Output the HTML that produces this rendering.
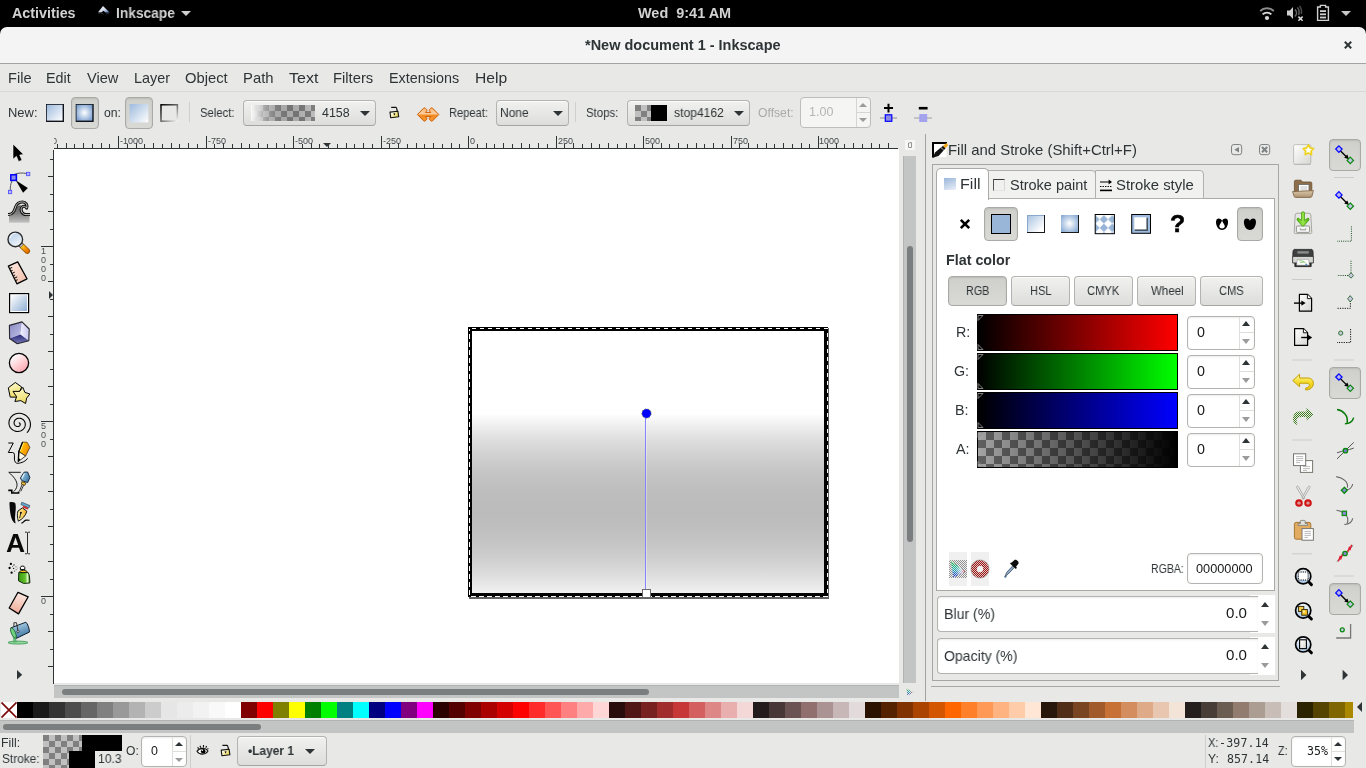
<!DOCTYPE html>
<html lang="en"><head><meta charset="utf-8"><title>*New document 1 - Inkscape</title>
<style>
html,body{margin:0;padding:0;}
body{width:1366px;height:768px;overflow:hidden;position:relative;background:#e8e8e7;font-family:"Liberation Sans", sans-serif;}
div,span,svg{box-sizing:border-box;}
.t{position:absolute;line-height:20px;white-space:pre;color:#2e3436;will-change:transform;transform-origin:0 0;}
svg{position:absolute;overflow:visible;}

.btn{position:absolute;border:1px solid #b3b3af;border-bottom-color:#a4a4a0;border-radius:4px;background:linear-gradient(#f1f1f0,#dddddb);box-shadow:inset 0 1px 0 rgba(255,255,255,.75);}
.btn.on{background:linear-gradient(#cfcfcb,#d9d9d6);border-color:#a9a9a5;box-shadow:inset 0 1px 2px rgba(0,0,0,.10);}
.entry{position:absolute;border:1px solid #b3b3af;border-radius:4px;background:#fff;box-shadow:inset 0 1px 2px rgba(0,0,0,.08);}
.tri{position:absolute;width:0;height:0;}
.sep{position:absolute;background:#cfcfcd;}

</style></head>
<body>
<svg width="0" height="0" style="left:0;top:0"><defs>
<linearGradient id="gBlue" x1="0" y1="0" x2="1" y2="1"><stop offset="0" stop-color="#ffffff"/><stop offset="1" stop-color="#8fafd3"/></linearGradient>
<linearGradient id="gBlueR" x1="0" y1="0" x2="1" y2="1"><stop offset="0" stop-color="#9dbadd"/><stop offset="1" stop-color="#ffffff"/></linearGradient>
<radialGradient id="gRad" cx="0.5" cy="0.5" r="0.6"><stop offset="0" stop-color="#ffffff"/><stop offset="1" stop-color="#7fa3d1"/></radialGradient>
<linearGradient id="gPink" x1="0.2" y1="0.1" x2="0.8" y2="0.9"><stop offset="0" stop-color="#ffffff"/><stop offset="1" stop-color="#ffa8b2"/></linearGradient>
<linearGradient id="gTweak" x1="0" y1="0" x2="0" y2="1"><stop offset="0" stop-color="#5a5a5a"/><stop offset="0.45" stop-color="#808080"/><stop offset="1" stop-color="#c4c4c4"/></linearGradient>
<linearGradient id="gGlass" x1="0.2" y1="0" x2="0.8" y2="1"><stop offset="0" stop-color="#b7cfe9"/><stop offset="1" stop-color="#f3f7fb"/></linearGradient>
<linearGradient id="gSalmon" x1="0" y1="0" x2="1" y2="1"><stop offset="0" stop-color="#fdebe3"/><stop offset="1" stop-color="#f2bda9"/></linearGradient>
<linearGradient id="gEraser" x1="0.6" y1="0" x2="0.4" y2="1"><stop offset="0" stop-color="#fdece6"/><stop offset="1" stop-color="#efa994"/></linearGradient>
<linearGradient id="gYel" x1="0" y1="0" x2="0.3" y2="1"><stop offset="0" stop-color="#fffbd5"/><stop offset="1" stop-color="#eede6a"/></linearGradient>
<linearGradient id="gBoxL" x1="0" y1="0" x2="1" y2="1"><stop offset="0" stop-color="#8686c2"/><stop offset="1" stop-color="#c4c4e8"/></linearGradient>
<linearGradient id="gBoxR" x1="0" y1="0" x2="1" y2="0"><stop offset="0" stop-color="#f0f0ff"/><stop offset="1" stop-color="#c6c6ee"/></linearGradient>
<linearGradient id="gBoxB" x1="0.5" y1="0" x2="0.5" y2="1"><stop offset="0" stop-color="#28287a"/><stop offset="1" stop-color="#7a7ab8"/></linearGradient>
<linearGradient id="gPencil" x1="0" y1="0" x2="1" y2="0.4"><stop offset="0" stop-color="#ffe100"/><stop offset="0.5" stop-color="#ffb400"/><stop offset="1" stop-color="#f08c00"/></linearGradient>
<linearGradient id="gPen" x1="0" y1="0" x2="1" y2="0.5"><stop offset="0" stop-color="#b5dcee"/><stop offset="1" stop-color="#3d78aa"/></linearGradient>
<linearGradient id="gNib" x1="0" y1="0" x2="1" y2="0"><stop offset="0" stop-color="#fff6b8"/><stop offset="1" stop-color="#f0b020"/></linearGradient>
<linearGradient id="gCan" x1="0" y1="0" x2="1" y2="0"><stop offset="0" stop-color="#3c9a12"/><stop offset="0.6" stop-color="#62c02a"/><stop offset="0.8" stop-color="#d8f5c0"/><stop offset="1" stop-color="#3a9010"/></linearGradient>
<linearGradient id="gBucket" x1="0.3" y1="0" x2="0.7" y2="1"><stop offset="0" stop-color="#b4d8ec"/><stop offset="1" stop-color="#356c9c"/></linearGradient>
<linearGradient id="gHandle" x1="0" y1="0" x2="1" y2="1"><stop offset="0" stop-color="#ffc520"/><stop offset="1" stop-color="#e87800"/></linearGradient>
</defs></svg>
<!-- top bar -->
<div style="position:absolute;left:0px;top:0px;width:1366px;height:36px;background:#000;"></div>
<span id="t0" class="t" style="left:11.75px;top:3.27px;font-size:14.3px;font-weight:bold;color:#d2d2d2;transform:scaleX(0.9992);">Activities</span>
<span id="t1" class="t" style="left:116.06px;top:3.27px;font-size:14.3px;font-weight:bold;color:#d2d2d2;transform:scaleX(0.9623);">Inkscape</span>
<div class="tri" style="left:180.9px;top:10.8px;border-left:5.3px solid transparent;border-right:5.3px solid transparent;border-top:5.8px solid #d0d0d0;"></div>
<span id="t2" class="t" style="left:637.80px;top:3.07px;font-size:14.3px;font-weight:bold;color:#d2d2d2;transform:scaleX(1.0104);">Wed  9:41 AM</span>
<div class="tri" style="left:1341px;top:11px;border-left:5.0px solid transparent;border-right:5.0px solid transparent;border-top:5.2px solid #c8c8c8;"></div>
<svg style="left:90px;top:0px" width="1270" height="27" viewBox="90 0 1270 27" ><defs><linearGradient id="gInk" x1="0" y1="0" x2="1" y2="1"><stop offset="0" stop-color="#ffffff"/><stop offset="0.6" stop-color="#c8d4e4"/><stop offset="1" stop-color="#3a62a8"/></linearGradient></defs><path d="M103 6 L109.6 12.6 L105.5 12.4 L103.6 10.8 L101.2 12.6 L98 12.2 Z" fill="url(#gInk)"/><path d="M98.4 13.6 L101 12.8 L103.6 14.2 M106 14 L109 13.4" stroke="#3a3a3a" stroke-width="0.8" fill="none"/><circle cx="1267" cy="18" r="2.1" fill="#d6d6d6"/><path d="M1262.6 14.4 A6.2 6.2 0 0 1 1271.4 14.4" fill="none" stroke="#d6d6d6" stroke-width="1.8"/><path d="M1260.2 11 A9.8 9.8 0 0 1 1273.8 11" fill="none" stroke="#8e8e8e" stroke-width="1.9"/><path d="M1287 10.6 L1289.8 10.6 L1293 7 L1293 19 L1289.8 15.6 L1287 15.6 Z" fill="#d0d0d0"/><path d="M1295 9.6 A5 5 0 0 1 1295 16.6" fill="none" stroke="#6a6a6a" stroke-width="1.5"/><path d="M1297.4 7.4 A8 8 0 0 1 1298.6 15" fill="none" stroke="#5a5a5a" stroke-width="1.5"/><path d="M1299.6 5.8 A11 11 0 0 1 1301.4 14" fill="none" stroke="#4a4a4a" stroke-width="1.4"/><path d="M1298.4 16.6 L1302.6 20.8 M1302.6 16.6 L1298.4 20.8" stroke="#d8d8d8" stroke-width="1.5"/><path d="M1320.4 7 L1320.4 5.4 L1325.6 5.4 L1325.6 7 L1328.4 7 L1328.4 20.4 L1317.6 20.4 L1317.6 7 Z" fill="none" stroke="#d0d0d0" stroke-width="1.4"/><rect x="1320" y="10.2" width="6" height="1.8" fill="#d0d0d0"/><rect x="1320" y="13.4" width="6" height="1.8" fill="#d0d0d0"/><rect x="1320" y="16.6" width="6" height="1.8" fill="#d0d0d0"/></svg>
<!-- title bar -->
<div style="position:absolute;left:0px;top:27px;width:1366px;height:36px;background:#f4f4f4;border-radius:7px 7px 0 0;"></div>
<div style="position:absolute;left:0px;top:63px;width:1366px;height:1px;background:#a3a39f;"></div>
<span id="t3" class="t" style="left:584.99px;top:35.27px;font-size:14.3px;font-weight:bold;transform:scaleX(1.0130);">*New document 1 - Inkscape</span>
<svg style="left:1344px;top:41px" width="8" height="8" viewBox="0 0 8 8"><path d="M0.8 0.8 L7.2 7.2 M7.2 0.8 L0.8 7.2" stroke="#2e3436" stroke-width="2" fill="none"/></svg>
<!-- menu bar -->
<span id="t4" class="t" style="left:7.53px;top:68.07px;font-size:14.3px;transform:scaleX(1.0212);">File</span>
<span id="t5" class="t" style="left:45.96px;top:68.07px;font-size:14.3px;transform:scaleX(0.9935);">Edit</span>
<span id="t6" class="t" style="left:87.20px;top:68.07px;font-size:14.3px;transform:scaleX(1.0211);">View</span>
<span id="t7" class="t" style="left:134.35px;top:68.07px;font-size:14.3px;transform:scaleX(1.0044);">Layer</span>
<span id="t8" class="t" style="left:185.43px;top:68.07px;font-size:14.3px;transform:scaleX(1.0321);">Object</span>
<span id="t9" class="t" style="left:243.31px;top:68.07px;font-size:14.3px;transform:scaleX(1.0385);">Path</span>
<span id="t10" class="t" style="left:288.93px;top:68.07px;font-size:14.3px;transform:scaleX(1.1192);">Text</span>
<span id="t11" class="t" style="left:332.89px;top:68.07px;font-size:14.3px;transform:scaleX(1.0336);">Filters</span>
<span id="t12" class="t" style="left:388.74px;top:68.07px;font-size:14.3px;transform:scaleX(1.0037);">Extensions</span>
<span id="t13" class="t" style="left:474.79px;top:68.07px;font-size:14.3px;transform:scaleX(1.0945);">Help</span>
<div style="position:absolute;left:0px;top:91px;width:1366px;height:1px;background:#d9d9d7;"></div>
<!-- tool controls -->
<span id="t14" class="t" style="left:7.55px;top:103.00px;font-size:12.1px;transform:scaleX(1.0706);">New:</span>
<svg style="left:44px;top:102px" width="24" height="24" viewBox="44 102 24 24" ><rect x="46" y="104" width="18" height="18" fill="#10141a"/><rect x="46.8" y="104.8" width="15.8" height="15.8" fill="url(#gBlueR)"/></svg>
<div class="btn on" style="left:71px;top:97px;width:28px;height:32px;"></div>
<svg style="left:74px;top:102px" width="24" height="24" viewBox="74 102 24 24" ><rect x="75.7" y="104" width="18" height="18" fill="#10141a"/><rect x="76.5" y="104.8" width="15.8" height="15.8" fill="url(#gRad)"/></svg>
<span id="t15" class="t" style="left:103.90px;top:103.00px;font-size:12.1px;transform:scaleX(1.0098);">on:</span>
<div class="btn on" style="left:125px;top:97px;width:28px;height:32px;"></div>
<svg style="left:128px;top:102px" width="24" height="24" viewBox="128 102 24 24" ><rect x="129.6" y="104" width="18.7" height="18.4" fill="url(#gBlueR)"/></svg>
<svg style="left:158px;top:102px" width="24" height="24" viewBox="158 102 24 24" ><defs><linearGradient id="gStk" x1="0" y1="0" x2="1" y2="1"><stop offset="0" stop-color="#000"/><stop offset="0.5" stop-color="#666"/><stop offset="1" stop-color="#f4f4f4"/></linearGradient></defs><rect x="161" y="104.8" width="16.4" height="16.4" fill="none" stroke="url(#gStk)" stroke-width="1.5"/></svg>
<div class="sep" style="left:189px;top:102px;width:1px;height:20px;"></div>
<span id="t16" class="t" style="left:199.57px;top:103.00px;font-size:12.1px;transform:scaleX(0.9324);">Select:</span>
<div class="btn" style="left:243px;top:100px;width:133px;height:26px;"></div>
<div style="position:absolute;left:251px;top:105px;width:64px;height:16px;background-color:#808080;background-image:linear-gradient(45deg,#c0c0c0 25%,transparent 25%,transparent 75%,#c0c0c0 75%),linear-gradient(45deg,#c0c0c0 25%,transparent 25%,transparent 75%,#c0c0c0 75%);background-size:12px 12px;background-position:0 0,6.0px 6.0px;"><div style="position:absolute;left:0px;top:0px;width:64px;height:16px;background:linear-gradient(90deg,rgba(250,250,250,1) 0%,rgba(238,238,238,.95) 5%,rgba(222,222,222,.85) 12%,rgba(190,190,190,.6) 22%,rgba(130,130,130,.36) 38%,rgba(70,70,70,.2) 55%,rgba(40,40,40,.14) 72%,rgba(20,20,20,.07) 88%,rgba(0,0,0,0) 100%);"></div></div>
<span id="t17" class="t" style="left:322.15px;top:103.10px;font-size:12.4px;transform:scaleX(1.0019);">4158</span>
<div class="tri" style="left:359.8px;top:111px;border-left:5.0px solid transparent;border-right:5.0px solid transparent;border-top:5px solid #2e3436;"></div>
<svg style="left:386px;top:104px" width="16" height="18" viewBox="386 104 16 18" ><defs><linearGradient id="gLock" x1="0" y1="0" x2="1" y2="0.6"><stop offset="0.15" stop-color="#ffffff"/><stop offset="1" stop-color="#e6d24a"/></linearGradient></defs><path d="M391.2 107.3 L395.9 107.3 C396.7 107.3 396.9 109.2 397.3 111.5" fill="none" stroke="#111" stroke-width="1.2"/><path d="M390.0 112.10000000000001 L397.9 111.2 L398.7 116.8 L390.7 117.8 Z" fill="url(#gLock)" stroke="#111" stroke-width="1.1" stroke-linejoin="round"/><path d="M393.3 113.4 L395.3 113.3 L394.5 115.60000000000001 Z" fill="#000"/></svg>
<svg style="left:415px;top:105px" width="28" height="20" viewBox="415 105 28 20" ><defs><linearGradient id="gOr" x1="0" y1="0" x2="0" y2="1"><stop offset="0" stop-color="#fdb36a"/><stop offset="0.45" stop-color="#fbd0a4"/><stop offset="0.55" stop-color="#f58a22"/><stop offset="1" stop-color="#f7962f"/></linearGradient></defs><path d="M417.4 114.5 L423.6 108.2 Q424.6 107.4 425.6 108.4 L426.6 109.4 Q427.4 110.4 426.4 111.4 L425.4 112.4 L430.8 112.4 L429.8 111.4 Q428.8 110.4 429.6 109.4 L430.6 108.4 Q431.6 107.4 432.6 108.2 L438.8 114.5 L432.6 120.8 Q431.6 121.6 430.6 120.6 L429.6 119.6 Q428.8 118.6 429.8 117.6 L430.8 116.6 L425.4 116.6 L426.4 117.6 Q427.4 118.6 426.6 119.6 L425.6 120.6 Q424.6 121.6 423.6 120.8 Z" fill="url(#gOr)" stroke="#cc5c00" stroke-width="1" stroke-linejoin="round"/></svg>
<span id="t18" class="t" style="left:448.85px;top:103.00px;font-size:12.1px;transform:scaleX(0.9168);">Repeat:</span>
<div class="btn" style="left:496px;top:100px;width:73px;height:26px;"></div>
<span id="t19" class="t" style="left:500.25px;top:103.10px;font-size:12.4px;transform:scaleX(0.9679);">None</span>
<div class="tri" style="left:552.9px;top:111px;border-left:5.0px solid transparent;border-right:5.0px solid transparent;border-top:5px solid #2e3436;"></div>
<div class="sep" style="left:575px;top:102px;width:1px;height:20px;"></div>
<span id="t20" class="t" style="left:585.56px;top:103.00px;font-size:12.1px;transform:scaleX(0.9405);">Stops:</span>
<div class="btn" style="left:627px;top:100px;width:123px;height:26px;"></div>
<div style="position:absolute;left:635px;top:105px;width:16px;height:16px;background-color:#808080;background-image:linear-gradient(45deg,#c0c0c0 25%,transparent 25%,transparent 75%,#c0c0c0 75%),linear-gradient(45deg,#c0c0c0 25%,transparent 25%,transparent 75%,#c0c0c0 75%);background-size:12px 12px;background-position:0 0,6.0px 6.0px;"></div>
<div style="position:absolute;left:651px;top:105px;width:16px;height:16px;background:#000;"></div>
<span id="t21" class="t" style="left:673.52px;top:103.10px;font-size:12.4px;transform:scaleX(0.9780);">stop4162</span>
<div class="tri" style="left:734px;top:111px;border-left:5.0px solid transparent;border-right:5.0px solid transparent;border-top:5px solid #2e3436;"></div>
<span id="t22" class="t" style="left:758.49px;top:103.00px;font-size:12.1px;color:#a9abab;transform:scaleX(1.0074);">Offset:</span>
<div class="entry" style="left:800px;top:97px;width:71px;height:31px;background:#f5f5f4;border-color:#bdbdb9;box-shadow:none;"></div>
<div style="position:absolute;left:856px;top:98px;width:1px;height:29px;background:#d5d5d2;"></div>
<div style="position:absolute;left:857px;top:112px;width:13px;height:1px;background:#d5d5d2;"></div>
<span id="t23" class="t" style="left:808.98px;top:101.70px;font-size:12.4px;color:#b4b6b5;transform:scaleX(1.0110);">1.00</span>
<div class="tri" style="left:859px;top:102.6px;border-left:4.5px solid transparent;border-right:4.5px solid transparent;border-bottom:4.5px solid #9a9c9b;"></div>
<div class="tri" style="left:859px;top:118px;border-left:4.5px solid transparent;border-right:4.5px solid transparent;border-top:4.5px solid #9a9c9b;"></div>
<svg style="left:878px;top:102px" width="22" height="22" viewBox="878 102 22 22" ><path d="M884 108 H893 M888.5 103.8 V112.4" stroke="#000" stroke-width="2"/><path d="M880 118 H897" stroke="#909090" stroke-width="1"/><rect x="885.3" y="114.8" width="6.5" height="6.5" fill="#8c8ce4" stroke="#0000ff" stroke-width="1.2"/></svg>
<svg style="left:912px;top:102px" width="22" height="22" viewBox="912 102 22 22" ><path d="M918.8 108.2 H927.6" stroke="#000" stroke-width="2.6"/><path d="M914 118 H932" stroke="#a0a0a0" stroke-width="1"/><rect x="919.8" y="114.6" width="7" height="7" fill="#a4a4ec" stroke="#9a9af0" stroke-width="0.8"/></svg>
<!-- rulers -->
<svg style="left:54px;top:134px" width="845" height="16" viewBox="54 134 845 16" shape-rendering="crispEdges"><rect x="54" y="148" width="844" height="1" fill="#2e3436"/><rect x="57" y="144" width="1" height="4" fill="#2e3436"/><rect x="66" y="143" width="1" height="5" fill="#2e3436"/><rect x="74" y="144" width="1" height="4" fill="#2e3436"/><rect x="83" y="143" width="1" height="5" fill="#2e3436"/><rect x="92" y="144" width="1" height="4" fill="#2e3436"/><rect x="101" y="143" width="1" height="5" fill="#2e3436"/><rect x="109" y="144" width="1" height="4" fill="#2e3436"/><rect x="118" y="136" width="1" height="12" fill="#2e3436"/><rect x="127" y="144" width="1" height="4" fill="#2e3436"/><rect x="136" y="143" width="1" height="5" fill="#2e3436"/><rect x="144" y="144" width="1" height="4" fill="#2e3436"/><rect x="153" y="143" width="1" height="5" fill="#2e3436"/><rect x="162" y="144" width="1" height="4" fill="#2e3436"/><rect x="171" y="143" width="1" height="5" fill="#2e3436"/><rect x="179" y="144" width="1" height="4" fill="#2e3436"/><rect x="188" y="143" width="1" height="5" fill="#2e3436"/><rect x="197" y="144" width="1" height="4" fill="#2e3436"/><rect x="206" y="136" width="1" height="12" fill="#2e3436"/><rect x="214" y="144" width="1" height="4" fill="#2e3436"/><rect x="223" y="143" width="1" height="5" fill="#2e3436"/><rect x="232" y="144" width="1" height="4" fill="#2e3436"/><rect x="241" y="143" width="1" height="5" fill="#2e3436"/><rect x="249" y="144" width="1" height="4" fill="#2e3436"/><rect x="258" y="143" width="1" height="5" fill="#2e3436"/><rect x="267" y="144" width="1" height="4" fill="#2e3436"/><rect x="276" y="143" width="1" height="5" fill="#2e3436"/><rect x="284" y="144" width="1" height="4" fill="#2e3436"/><rect x="293" y="136" width="1" height="12" fill="#2e3436"/><rect x="302" y="144" width="1" height="4" fill="#2e3436"/><rect x="311" y="143" width="1" height="5" fill="#2e3436"/><rect x="319" y="144" width="1" height="4" fill="#2e3436"/><rect x="328" y="143" width="1" height="5" fill="#2e3436"/><rect x="337" y="144" width="1" height="4" fill="#2e3436"/><rect x="346" y="143" width="1" height="5" fill="#2e3436"/><rect x="354" y="144" width="1" height="4" fill="#2e3436"/><rect x="363" y="143" width="1" height="5" fill="#2e3436"/><rect x="372" y="144" width="1" height="4" fill="#2e3436"/><rect x="381" y="136" width="1" height="12" fill="#2e3436"/><rect x="389" y="144" width="1" height="4" fill="#2e3436"/><rect x="398" y="143" width="1" height="5" fill="#2e3436"/><rect x="407" y="144" width="1" height="4" fill="#2e3436"/><rect x="416" y="143" width="1" height="5" fill="#2e3436"/><rect x="424" y="144" width="1" height="4" fill="#2e3436"/><rect x="433" y="143" width="1" height="5" fill="#2e3436"/><rect x="442" y="144" width="1" height="4" fill="#2e3436"/><rect x="451" y="143" width="1" height="5" fill="#2e3436"/><rect x="459" y="144" width="1" height="4" fill="#2e3436"/><rect x="468" y="136" width="1" height="12" fill="#2e3436"/><rect x="477" y="144" width="1" height="4" fill="#2e3436"/><rect x="486" y="143" width="1" height="5" fill="#2e3436"/><rect x="494" y="144" width="1" height="4" fill="#2e3436"/><rect x="503" y="143" width="1" height="5" fill="#2e3436"/><rect x="512" y="144" width="1" height="4" fill="#2e3436"/><rect x="521" y="143" width="1" height="5" fill="#2e3436"/><rect x="529" y="144" width="1" height="4" fill="#2e3436"/><rect x="538" y="143" width="1" height="5" fill="#2e3436"/><rect x="547" y="144" width="1" height="4" fill="#2e3436"/><rect x="556" y="136" width="1" height="12" fill="#2e3436"/><rect x="564" y="144" width="1" height="4" fill="#2e3436"/><rect x="573" y="143" width="1" height="5" fill="#2e3436"/><rect x="582" y="144" width="1" height="4" fill="#2e3436"/><rect x="591" y="143" width="1" height="5" fill="#2e3436"/><rect x="599" y="144" width="1" height="4" fill="#2e3436"/><rect x="608" y="143" width="1" height="5" fill="#2e3436"/><rect x="617" y="144" width="1" height="4" fill="#2e3436"/><rect x="626" y="143" width="1" height="5" fill="#2e3436"/><rect x="634" y="144" width="1" height="4" fill="#2e3436"/><rect x="643" y="136" width="1" height="12" fill="#2e3436"/><rect x="652" y="144" width="1" height="4" fill="#2e3436"/><rect x="661" y="143" width="1" height="5" fill="#2e3436"/><rect x="669" y="144" width="1" height="4" fill="#2e3436"/><rect x="678" y="143" width="1" height="5" fill="#2e3436"/><rect x="687" y="144" width="1" height="4" fill="#2e3436"/><rect x="696" y="143" width="1" height="5" fill="#2e3436"/><rect x="704" y="144" width="1" height="4" fill="#2e3436"/><rect x="713" y="143" width="1" height="5" fill="#2e3436"/><rect x="722" y="144" width="1" height="4" fill="#2e3436"/><rect x="731" y="136" width="1" height="12" fill="#2e3436"/><rect x="739" y="144" width="1" height="4" fill="#2e3436"/><rect x="748" y="143" width="1" height="5" fill="#2e3436"/><rect x="757" y="144" width="1" height="4" fill="#2e3436"/><rect x="766" y="143" width="1" height="5" fill="#2e3436"/><rect x="774" y="144" width="1" height="4" fill="#2e3436"/><rect x="783" y="143" width="1" height="5" fill="#2e3436"/><rect x="792" y="144" width="1" height="4" fill="#2e3436"/><rect x="801" y="143" width="1" height="5" fill="#2e3436"/><rect x="809" y="144" width="1" height="4" fill="#2e3436"/><rect x="818" y="136" width="1" height="12" fill="#2e3436"/><rect x="827" y="144" width="1" height="4" fill="#2e3436"/><rect x="836" y="143" width="1" height="5" fill="#2e3436"/><rect x="844" y="144" width="1" height="4" fill="#2e3436"/><rect x="853" y="143" width="1" height="5" fill="#2e3436"/><rect x="862" y="144" width="1" height="4" fill="#2e3436"/><rect x="871" y="143" width="1" height="5" fill="#2e3436"/><rect x="879" y="144" width="1" height="4" fill="#2e3436"/><rect x="888" y="143" width="1" height="5" fill="#2e3436"/></svg>
<span id="t24" class="t" style="left:119.75px;top:131.43px;font-size:9px;color:#43484a;">-1000</span>
<span id="t25" class="t" style="left:207.75px;top:131.43px;font-size:9px;color:#43484a;">-750</span>
<span id="t26" class="t" style="left:294.75px;top:131.43px;font-size:9px;color:#43484a;">-500</span>
<span id="t27" class="t" style="left:382.75px;top:131.43px;font-size:9px;color:#43484a;">-250</span>
<span id="t28" class="t" style="left:469.75px;top:131.43px;font-size:9px;color:#43484a;">0</span>
<span id="t29" class="t" style="left:557.50px;top:131.43px;font-size:9px;color:#43484a;">250</span>
<span id="t30" class="t" style="left:644.50px;top:131.43px;font-size:9px;color:#43484a;">500</span>
<span id="t31" class="t" style="left:732.50px;top:131.43px;font-size:9px;color:#43484a;">750</span>
<span id="t32" class="t" style="left:819.25px;top:131.43px;font-size:9px;color:#43484a;">1000</span>
<div style="position:absolute;left:54px;top:134px;width:10px;height:14px;overflow:hidden;"><span id="t33" class="t" style="left:-2.45px;top:-2.57px;font-size:9px;color:#4b5052;">0</span></div>
<div class="tri" style="left:322.5px;top:143.3px;border-left:4.75px solid transparent;border-right:4.75px solid transparent;border-top:4.7px solid #2e3436;"></div>
<svg style="left:40px;top:150px" width="14" height="534" viewBox="40 150 14 534" shape-rendering="crispEdges"><rect x="53" y="150" width="1" height="534" fill="#2e3436"/><rect x="48" y="666" width="5" height="1" fill="#2e3436"/><rect x="50" y="649" width="3" height="1" fill="#2e3436"/><rect x="48" y="631" width="5" height="1" fill="#2e3436"/><rect x="50" y="614" width="3" height="1" fill="#2e3436"/><rect x="41" y="596" width="12" height="1" fill="#2e3436"/><rect x="50" y="579" width="3" height="1" fill="#2e3436"/><rect x="48" y="561" width="5" height="1" fill="#2e3436"/><rect x="50" y="544" width="3" height="1" fill="#2e3436"/><rect x="48" y="526" width="5" height="1" fill="#2e3436"/><rect x="50" y="509" width="3" height="1" fill="#2e3436"/><rect x="48" y="491" width="5" height="1" fill="#2e3436"/><rect x="50" y="474" width="3" height="1" fill="#2e3436"/><rect x="48" y="456" width="5" height="1" fill="#2e3436"/><rect x="50" y="439" width="3" height="1" fill="#2e3436"/><rect x="41" y="421" width="12" height="1" fill="#2e3436"/><rect x="50" y="404" width="3" height="1" fill="#2e3436"/><rect x="48" y="386" width="5" height="1" fill="#2e3436"/><rect x="50" y="369" width="3" height="1" fill="#2e3436"/><rect x="48" y="351" width="5" height="1" fill="#2e3436"/><rect x="50" y="334" width="3" height="1" fill="#2e3436"/><rect x="48" y="316" width="5" height="1" fill="#2e3436"/><rect x="50" y="299" width="3" height="1" fill="#2e3436"/><rect x="48" y="281" width="5" height="1" fill="#2e3436"/><rect x="50" y="264" width="3" height="1" fill="#2e3436"/><rect x="41" y="246" width="12" height="1" fill="#2e3436"/><rect x="50" y="229" width="3" height="1" fill="#2e3436"/><rect x="48" y="211" width="5" height="1" fill="#2e3436"/><rect x="50" y="194" width="3" height="1" fill="#2e3436"/><rect x="48" y="176" width="5" height="1" fill="#2e3436"/><rect x="50" y="159" width="3" height="1" fill="#2e3436"/></svg>
<div class="t" style="left:41px;top:246.98px;width:6px;white-space:normal;word-break:break-all;line-height:9.1px;font-size:9px;color:#4b5052;">1000</div>
<div class="t" style="left:41px;top:421.98px;width:6px;white-space:normal;word-break:break-all;line-height:9.1px;font-size:9px;color:#4b5052;">500</div>
<div class="t" style="left:41px;top:596.98px;width:6px;white-space:normal;word-break:break-all;line-height:9.1px;font-size:9px;color:#4b5052;">0</div>
<div class="tri" style="left:49px;top:291px;border-top:4.5px solid transparent;border-bottom:4.5px solid transparent;border-left:4.5px solid #2e3436;"></div>
<!-- canvas -->
<div style="position:absolute;left:54px;top:149px;width:845px;height:534px;background:#fff;"></div>
<div style="position:absolute;left:903px;top:156px;width:13px;height:527px;background:#c3c5c4;border-left:1px solid #b2b4b3;"></div>
<div style="position:absolute;left:907px;top:245.5px;width:6px;height:296px;background:#7a7e7e;border-radius:3px;"></div>
<div style="position:absolute;left:54px;top:685px;width:845px;height:13px;background:#c3c5c4;border-top:1px solid #b2b4b3;"></div>
<div style="position:absolute;left:62px;top:688.5px;width:587px;height:6px;background:#7a7e7e;border-radius:3px;"></div>
<svg style="left:904px;top:139px" width="12" height="12" viewBox="904 139 12 12" ><rect x="905" y="140" width="10" height="10" fill="#f6f6f5"/><path d="M908.5 143 L911.5 142.5 L911.5 147.5 M908.5 143 L908.5 147.5 L911.5 147.5" fill="none" stroke="#8a8a8a" stroke-width="0.9"/></svg>
<svg style="left:905px;top:687px" width="10" height="10" viewBox="905 687 10 10" ><defs><pattern id="pStipS" x="0" y="0" width="2" height="2" patternUnits="userSpaceOnUse"><rect x="0" y="0" width="1" height="1" fill="#e8e8e7"/><rect x="1" y="1" width="1" height="1" fill="#e8e8e7"/></pattern><linearGradient id="gGamS" x1="0" y1="0" x2="0" y2="1"><stop offset="0" stop-color="#18a030"/><stop offset="0.5" stop-color="#20a0a0"/><stop offset="1" stop-color="#2020c8"/></linearGradient><linearGradient id="gGamS2" x1="0" y1="0" x2="1" y2="0"><stop offset="0.3" stop-color="#fff" stop-opacity="0"/><stop offset="1" stop-color="#d02020"/></linearGradient></defs><path d="M906.6 688.4 L913.4 692.4 L907.4 695.6 Z" fill="url(#gGamS)"/><path d="M906.6 688.4 L913.4 692.4 L907.4 695.6 Z" fill="url(#gGamS2)"/><rect x="906" y="688" width="8" height="8" fill="url(#pStipS)"/></svg>
<div style="position:absolute;left:469px;top:328px;width:360px;height:271px;background:#626262;"></div>
<div style="position:absolute;left:468px;top:327px;width:360px;height:270.4px;background:#000;"></div>
<div style="position:absolute;left:472px;top:331px;width:351.5px;height:262px;background:linear-gradient(180deg,#fff 0px,rgb(255,255,255) 82.5px,rgb(247,247,247) 88.5px,rgb(239,239,239) 94.5px,rgb(232,232,232) 100.5px,rgb(225,225,225) 106.5px,rgb(219,219,219) 112.5px,rgb(214,214,214) 118.5px,rgb(209,209,209) 124.5px,rgb(204,204,204) 130.5px,rgb(200,200,200) 136.5px,rgb(197,197,197) 142.5px,rgb(194,194,194) 148.5px,rgb(192,192,192) 154.5px,rgb(190,190,190) 160.5px,rgb(189,189,189) 166.5px,rgb(188,188,188) 172.5px,rgb(188,188,188) 178.5px,rgb(188,188,188) 184.5px,rgb(189,189,189) 190.5px,rgb(191,191,191) 196.5px,rgb(193,193,193) 202.5px,rgb(195,195,195) 208.5px,rgb(198,198,198) 214.5px,rgb(202,202,202) 220.5px,rgb(206,206,206) 226.5px,rgb(211,211,211) 232.5px,rgb(216,216,216) 238.5px,rgb(222,222,222) 244.5px,rgb(228,228,228) 250.5px,rgb(235,235,235) 256.5px,rgb(242,242,242) 262.5px);"></div>
<svg style="left:468px;top:327px" width="361" height="271" viewBox="468 327 361 271" shape-rendering="crispEdges"><rect x="469.5" y="328.5" width="358" height="268" fill="none" stroke="#fff" stroke-width="1" stroke-dasharray="4.5 3.5" stroke-dashoffset="-2"/></svg>
<div style="position:absolute;left:645px;top:418px;width:1px;height:172px;background:#8484ff;"></div>
<div style="position:absolute;left:646px;top:418px;width:1px;height:172px;background:rgba(255,255,255,.35);"></div>
<svg style="left:641px;top:408px" width="11" height="11" viewBox="0 0 11 11"><circle cx="5.5" cy="5.5" r="4.6" fill="#0000ff" stroke="#5a5a30" stroke-width="0.8" stroke-dasharray="1.6 1.6"/></svg>
<div style="position:absolute;left:642px;top:589px;width:9px;height:9px;background:#fff;border:1px solid #6a6a6a;"></div>
<div style="position:absolute;left:925px;top:134px;width:1px;height:567px;background:#a2a29f;"></div>
<!-- dock -->
<svg style="left:931px;top:141px" width="18" height="18" viewBox="931 141 18 18" ><rect x="932.5" y="143" width="14" height="14" fill="#fff"/><path d="M933 157.5 L933 143 L947 143" fill="none" stroke="#000" stroke-width="2"/><path d="M932.6 157.8 L938.6 156 L945.6 148.2 L943 145.8 L935 152.6 Z" fill="#111"/><path d="M943 145.8 L945.6 148.2 L948.2 145 L946.4 143 Z" fill="#f2a516"/><path d="M941 147.6 L943.8 150.2" stroke="#fff" stroke-width="0.7"/></svg>
<span id="t34" class="t" style="left:947.90px;top:140.01px;font-size:14.5px;transform:scaleX(1.0281);">Fill and Stroke (Shift+Ctrl+F)</span>
<svg style="left:1230px;top:143px" width="42" height="14" viewBox="1230 143 42 14" ><rect x="1231.5" y="144.5" width="10.2" height="10.2" rx="2.4" fill="none" stroke="#7e8282" stroke-width="1"/><path d="M1239 147 L1239 152.4 L1234.4 149.7 Z" fill="#7e8282"/><rect x="1259.5" y="144.5" width="10.2" height="10.2" rx="2.4" fill="none" stroke="#7e8282" stroke-width="1"/><path d="M1262 147 L1267.2 152.2 M1267.2 147 L1262 152.2" stroke="#7e8282" stroke-width="2"/></svg>
<div style="position:absolute;left:932px;top:164px;width:347px;height:517px;border:1px solid #a6a6a2;"></div>
<div style="position:absolute;left:931px;top:686px;width:349px;height:1px;background:#a6a6a2;"></div>
<div style="position:absolute;left:936px;top:198px;width:339px;height:393px;background:#fff;border:1px solid #a9a9a5;"></div>
<div style="position:absolute;left:986px;top:170px;width:110px;height:29px;background:#f1f1f0;border:1px solid #b0b0ac;border-radius:0 4px 0 0;"></div>
<div style="position:absolute;left:1095px;top:170px;width:109px;height:29px;background:#f1f1f0;border:1px solid #b0b0ac;border-radius:0 4px 0 0;"></div>
<div style="position:absolute;left:936px;top:168px;width:53px;height:32px;background:#fff;border:1px solid #a9a9a5;border-bottom:none;border-radius:5px 5px 0 0;"></div>
<div style="position:absolute;left:944px;top:178px;width:12px;height:12px;background:linear-gradient(160deg,#9bb6da,#e9eff8);"></div>
<span id="t35" class="t" style="left:959.77px;top:173.91px;font-size:14.5px;transform:scaleX(1.1077);">Fill</span>
<div style="position:absolute;left:993px;top:179px;width:12px;height:12px;border:1px solid;border-color:#3a3a3a #d8d8d8 #e4e4e4 #555;"></div>
<span id="t36" class="t" style="left:1009.66px;top:175.21px;font-size:14.5px;transform:scaleX(0.9948);">Stroke paint</span>
<svg style="left:1099px;top:178px" width="14" height="14" viewBox="1099 178 14 14" ><path d="M1100 182 H1110" stroke="#000" stroke-width="1"/><path d="M1108.6 179.6 L1112 182 L1108.6 184.4 Z" fill="#000"/><path d="M1100 186.5 H1112" stroke="#000" stroke-width="1" stroke-dasharray="1.4 1.1"/><path d="M1100 190.4 H1112" stroke="#000" stroke-width="1.6"/></svg>
<span id="t37" class="t" style="left:1116.22px;top:175.21px;font-size:14.5px;transform:scaleX(1.0268);">Stroke style</span>
<svg style="left:960px;top:219px" width="10" height="10" viewBox="0 0 10 10"><path d="M0.8 0.8 L9.2 9.2 M9.2 0.8 L0.8 9.2" stroke="#000" stroke-width="2.6" fill="none"/></svg>
<div class="btn on" style="left:984px;top:207px;width:34px;height:34px;"></div>
<div style="position:absolute;left:991px;top:214px;width:20px;height:20px;background:#99b6d8;border:1px solid #000;"></div>
<div style="position:absolute;left:1027px;top:215px;width:18px;height:18px;background:linear-gradient(135deg,#a3bfe0 0%,#fff 85%);border:1px solid #1a1a1a;border-width:0 1px 1px 0;box-shadow:inset 1px 1px 0 #8aa7cc;"></div>
<div style="position:absolute;left:1061px;top:215px;width:18px;height:18px;background:radial-gradient(circle at 50% 50%,#fff 0%,#88aad4 90%);border:1px solid #1a1a1a;border-width:0 1px 1px 0;"></div>
<svg style="left:1094px;top:213px" width="22" height="22" viewBox="1094 213 22 22" ><defs><pattern id="pDia" x="1095.5" y="1" width="8.4" height="8.4" patternUnits="userSpaceOnUse"><rect width="8.4" height="8.4" fill="#fff"/><path d="M0 0 L4.2 0 L0 4.2 Z M8.4 0 L4.2 0 L8.4 4.2 Z M0 8.4 L0 4.2 L4.2 8.4 Z M8.4 8.4 L8.4 4.2 L4.2 8.4 Z" fill="#97b4d6"/></pattern></defs><rect x="1095.2" y="214.5" width="19.2" height="19.2" fill="url(#pDia)" stroke="#000" stroke-width="1"/></svg>
<svg style="left:1130px;top:213px" width="22" height="22" viewBox="1130 213 22 22" ><rect x="1131.7" y="214.5" width="18.8" height="18.8" fill="#9dbbdf" stroke="#000" stroke-width="1"/><rect x="1134.8" y="217.8" width="13.2" height="13.2" fill="#46525c"/><rect x="1134.2" y="217.2" width="12.2" height="12.2" fill="#fff"/></svg>
<span id="t38" class="t" style="left:1169.57px;top:213.67px;font-size:24px;font-weight:bold;color:#000;transform:scaleX(1.0367);-webkit-text-stroke:0.5px #000;">?</span>

<span id="t39" class="t" style="left:946.00px;top:250.17px;font-size:14.3px;font-weight:bold;transform:scaleX(1.0008);">Flat color</span>
<div class="btn on" style="left:948px;top:276px;width:59px;height:30px;"></div>
<span id="t40" class="t" style="left:965.60px;top:280.83px;font-size:12.3px;transform:scaleX(0.8700);">RGB</span>
<div class="btn" style="left:1011px;top:276px;width:59px;height:30px;"></div>
<span id="t41" class="t" style="left:1029.67px;top:280.83px;font-size:12.3px;transform:scaleX(0.9022);">HSL</span>
<div class="btn" style="left:1074px;top:276px;width:59px;height:30px;"></div>
<span id="t42" class="t" style="left:1086.59px;top:280.83px;font-size:12.3px;transform:scaleX(0.9122);">CMYK</span>
<div class="btn" style="left:1137px;top:276px;width:59px;height:30px;"></div>
<span id="t43" class="t" style="left:1150.78px;top:280.83px;font-size:12.3px;transform:scaleX(0.9382);">Wheel</span>
<div class="btn" style="left:1200px;top:276px;width:63px;height:30px;"></div>
<span id="t44" class="t" style="left:1218.59px;top:280.83px;font-size:12.3px;transform:scaleX(0.9067);">CMS</span>
<span id="t45" class="t" style="left:955.55px;top:321.97px;font-size:14.3px;">R:</span>
<div style="position:absolute;left:977px;top:314px;width:201px;height:37px;background:linear-gradient(90deg,#000,#f00);border:1px solid #000;"></div>
<svg style="left:978px;top:315px" width="6" height="35" viewBox="0 0 6 35"><path d="M0 0.5 H5 L0 5.5 Z M0 34.5 H5 L0 29.5 Z" fill="none" stroke="#8d8d8d" stroke-width="0.9"/></svg>
<div class="entry" style="left:1187px;top:315.5px;width:68px;height:34px;"></div>
<div style="position:absolute;left:1239px;top:316.5px;width:1px;height:32px;background:#dededb;"></div>
<div style="position:absolute;left:1240px;top:332px;width:14px;height:1px;background:#dededb;"></div>
<span id="t46" class="t" style="left:1196.50px;top:321.97px;font-size:14.3px;color:#161819;">0</span>
<div class="tri" style="left:1242px;top:321.3px;border-left:4.8px solid transparent;border-right:4.8px solid transparent;border-bottom:5px solid #2e3436;"></div>
<div class="tri" style="left:1242px;top:338.6px;border-left:4.8px solid transparent;border-right:4.8px solid transparent;border-top:5px solid #9a9c9b;"></div>
<span id="t47" class="t" style="left:954.25px;top:360.97px;font-size:14.3px;">G:</span>
<div style="position:absolute;left:977px;top:353px;width:201px;height:37px;background:linear-gradient(90deg,#000,#0f0);border:1px solid #000;"></div>
<svg style="left:978px;top:354px" width="6" height="35" viewBox="0 0 6 35"><path d="M0 0.5 H5 L0 5.5 Z M0 34.5 H5 L0 29.5 Z" fill="none" stroke="#8d8d8d" stroke-width="0.9"/></svg>
<div class="entry" style="left:1187px;top:354.5px;width:68px;height:34px;"></div>
<div style="position:absolute;left:1239px;top:355.5px;width:1px;height:32px;background:#dededb;"></div>
<div style="position:absolute;left:1240px;top:371px;width:14px;height:1px;background:#dededb;"></div>
<span id="t48" class="t" style="left:1196.50px;top:360.97px;font-size:14.3px;color:#161819;">0</span>
<div class="tri" style="left:1242px;top:360.3px;border-left:4.8px solid transparent;border-right:4.8px solid transparent;border-bottom:5px solid #2e3436;"></div>
<div class="tri" style="left:1242px;top:377.6px;border-left:4.8px solid transparent;border-right:4.8px solid transparent;border-top:5px solid #9a9c9b;"></div>
<span id="t49" class="t" style="left:954.95px;top:399.97px;font-size:14.3px;">B:</span>
<div style="position:absolute;left:977px;top:392px;width:201px;height:37px;background:linear-gradient(90deg,#000,#00f);border:1px solid #000;"></div>
<svg style="left:978px;top:393px" width="6" height="35" viewBox="0 0 6 35"><path d="M0 0.5 H5 L0 5.5 Z M0 34.5 H5 L0 29.5 Z" fill="none" stroke="#8d8d8d" stroke-width="0.9"/></svg>
<div class="entry" style="left:1187px;top:393.5px;width:68px;height:34px;"></div>
<div style="position:absolute;left:1239px;top:394.5px;width:1px;height:32px;background:#dededb;"></div>
<div style="position:absolute;left:1240px;top:410px;width:14px;height:1px;background:#dededb;"></div>
<span id="t50" class="t" style="left:1196.50px;top:399.97px;font-size:14.3px;color:#161819;">0</span>
<div class="tri" style="left:1242px;top:399.3px;border-left:4.8px solid transparent;border-right:4.8px solid transparent;border-bottom:5px solid #2e3436;"></div>
<div class="tri" style="left:1242px;top:416.6px;border-left:4.8px solid transparent;border-right:4.8px solid transparent;border-top:5px solid #9a9c9b;"></div>
<span id="t51" class="t" style="left:955.60px;top:438.97px;font-size:14.3px;">A:</span>
<div style="position:absolute;left:977px;top:431px;width:201px;height:37px;border:1px solid #000;background-color:#a4a4a4;background-image:linear-gradient(45deg,#606060 25%,transparent 25%,transparent 75%,#606060 75%),linear-gradient(45deg,#606060 25%,transparent 25%,transparent 75%,#606060 75%);background-size:16px 16px;background-position:0 0,8.0px 8.0px;"><div style="position:absolute;left:0px;top:0px;width:199px;height:35px;background:linear-gradient(90deg,rgba(0,0,0,0),rgba(0,0,0,1));"></div></div>
<svg style="left:978px;top:432px" width="6" height="35" viewBox="0 0 6 35"><path d="M0 0.5 H5 L0 5.5 Z M0 34.5 H5 L0 29.5 Z" fill="none" stroke="#8d8d8d" stroke-width="0.9"/></svg>
<div class="entry" style="left:1187px;top:432.5px;width:68px;height:34px;"></div>
<div style="position:absolute;left:1239px;top:433.5px;width:1px;height:32px;background:#dededb;"></div>
<div style="position:absolute;left:1240px;top:449px;width:14px;height:1px;background:#dededb;"></div>
<span id="t52" class="t" style="left:1196.50px;top:438.97px;font-size:14.3px;color:#161819;">0</span>
<div class="tri" style="left:1242px;top:438.3px;border-left:4.8px solid transparent;border-right:4.8px solid transparent;border-bottom:5px solid #2e3436;"></div>
<div class="tri" style="left:1242px;top:455.6px;border-left:4.8px solid transparent;border-right:4.8px solid transparent;border-top:5px solid #9a9c9b;"></div>
<div style="position:absolute;left:949px;top:552px;width:18px;height:34px;background:#f0f0f0;"></div>
<div style="position:absolute;left:971px;top:552px;width:18px;height:34px;background:#f0f0f0;"></div>
<svg style="left:948px;top:556px" width="74" height="26" viewBox="948 556 74 26" ><defs><pattern id="pStip" x="0" y="0" width="2" height="2" patternUnits="userSpaceOnUse"><rect x="0" y="0" width="1" height="1" fill="#f0f0f0" fill-opacity="0.8"/><rect x="1" y="1" width="1" height="1" fill="#f0f0f0" fill-opacity="0.8"/></pattern><pattern id="pStipD" x="0" y="0" width="2" height="2" patternUnits="userSpaceOnUse"><rect x="0" y="0" width="1" height="1" fill="#444" fill-opacity="0.55"/><rect x="1" y="1" width="1" height="1" fill="#444" fill-opacity="0.55"/></pattern><linearGradient id="gGam" x1="0" y1="0" x2="0" y2="1"><stop offset="0" stop-color="#18b030"/><stop offset="0.5" stop-color="#20b0b0"/><stop offset="1" stop-color="#2020c8"/></linearGradient><linearGradient id="gGam2" x1="0" y1="0" x2="1" y2="0"><stop offset="0.35" stop-color="#fff" stop-opacity="0"/><stop offset="0.7" stop-color="#ffe0f0" stop-opacity="0.75"/><stop offset="1" stop-color="#e02020"/></linearGradient></defs><rect x="949" y="560" width="18" height="18" fill="url(#pStipD)"/><path d="M951 561 L965.6 571.5 L953.4 577.6 Z" fill="url(#gGam)"/><path d="M951 561 L965.6 571.5 L953.4 577.6 Z" fill="url(#gGam2)"/><path d="M951 561 L965.6 571.5 L953.4 577.6 Z" fill="url(#pStip)"/><circle cx="980" cy="569" r="6.1" fill="none" stroke="#9a1414" stroke-width="5.8"/><circle cx="980" cy="569" r="6.1" fill="none" stroke="url(#pStip)" stroke-width="5.8"/><circle cx="980" cy="569" r="9.2" fill="none" stroke="#7a8a8a" stroke-width="0.6" stroke-opacity="0.7"/><path d="M1005.2 576.4 L1006.6 572.4 L1013 565.6 L1014.6 567.2 L1008.2 574 Z" fill="#8eaacb" stroke="#3c4a5a" stroke-width="0.8"/><path d="M1011.4 562.8 L1014.2 560.2 C1016 558.8 1019.6 561.6 1018.4 563.8 L1016 566.8 L1017 567.8 L1015.8 569 L1010 563.4 L1011 562.4 Z" fill="#0c0c0c"/><circle cx="1005.4" cy="576.6" r="1.2" fill="#5a7898"/></svg>
<span id="t53" class="t" style="left:1151.19px;top:558.80px;font-size:12.1px;transform:scaleX(0.8704);">RGBA:</span>
<div class="entry" style="left:1187px;top:553px;width:76px;height:31px;"></div>
<span id="t54" class="t" style="left:1196.49px;top:558.70px;font-size:12.4px;color:#161819;transform:scaleX(1.0286);">00000000</span>
<div style="position:absolute;left:1250px;top:595px;width:25px;height:38px;background:#fff;"></div>
<div class="entry" style="left:937px;top:596px;width:321px;height:36px;border-right:none;border-radius:4px 0 0 4px;"></div>
<span id="t55" class="t" style="left:943.57px;top:604.11px;font-size:14.5px;transform:scaleX(0.9731);">Blur (%)</span>
<span id="t56" class="t" style="left:1225.88px;top:603.17px;font-size:14.3px;color:#161819;transform:scaleX(1.0560);">0.0</span>
<div class="tri" style="left:1260.6px;top:602.3px;border-left:4.8px solid transparent;border-right:4.8px solid transparent;border-bottom:5px solid #2e3436;"></div>
<div class="tri" style="left:1260.6px;top:620.8px;border-left:4.8px solid transparent;border-right:4.8px solid transparent;border-top:5px solid #9a9c9b;"></div>
<div style="position:absolute;left:1250px;top:637px;width:25px;height:38px;background:#fff;"></div>
<div class="entry" style="left:937px;top:638px;width:321px;height:36px;border-right:none;border-radius:4px 0 0 4px;"></div>
<span id="t57" class="t" style="left:944.06px;top:646.11px;font-size:14.5px;transform:scaleX(0.9684);">Opacity (%)</span>
<span id="t58" class="t" style="left:1225.88px;top:645.17px;font-size:14.3px;color:#161819;transform:scaleX(1.0560);">0.0</span>
<div class="tri" style="left:1260.6px;top:644.3px;border-left:4.8px solid transparent;border-right:4.8px solid transparent;border-bottom:5px solid #2e3436;"></div>
<div class="tri" style="left:1260.6px;top:662.8px;border-left:4.8px solid transparent;border-right:4.8px solid transparent;border-top:5px solid #9a9c9b;"></div>
<!-- palette -->
<div style="position:absolute;left:1px;top:702px;width:1352px;height:16px;overflow:hidden;"><div style="position:absolute;left:0;top:0;width:16px;height:16px;background:#fff;"><svg style="left:0;top:0" width="16" height="16" viewBox="0 0 16 16"><path d="M0.5 0.5 L15.5 15.5 M15.5 0.5 L0.5 15.5" stroke="#7a0808" stroke-width="1.7"/></svg></div><div style="position:absolute;left:16px;top:0;width:16px;height:16px;background:#000000;"></div><div style="position:absolute;left:32px;top:0;width:16px;height:16px;background:#1a1a1a;"></div><div style="position:absolute;left:48px;top:0;width:16px;height:16px;background:#333333;"></div><div style="position:absolute;left:64px;top:0;width:16px;height:16px;background:#4d4d4d;"></div><div style="position:absolute;left:80px;top:0;width:16px;height:16px;background:#666666;"></div><div style="position:absolute;left:96px;top:0;width:16px;height:16px;background:#808080;"></div><div style="position:absolute;left:112px;top:0;width:16px;height:16px;background:#999999;"></div><div style="position:absolute;left:128px;top:0;width:16px;height:16px;background:#b3b3b3;"></div><div style="position:absolute;left:144px;top:0;width:16px;height:16px;background:#cccccc;"></div><div style="position:absolute;left:160px;top:0;width:16px;height:16px;background:#e6e6e6;"></div><div style="position:absolute;left:176px;top:0;width:16px;height:16px;background:#ececec;"></div><div style="position:absolute;left:192px;top:0;width:16px;height:16px;background:#f2f2f2;"></div><div style="position:absolute;left:208px;top:0;width:16px;height:16px;background:#f9f9f9;"></div><div style="position:absolute;left:224px;top:0;width:16px;height:16px;background:#ffffff;"></div><div style="position:absolute;left:240px;top:0;width:16px;height:16px;background:#800000;"></div><div style="position:absolute;left:256px;top:0;width:16px;height:16px;background:#ff0000;"></div><div style="position:absolute;left:272px;top:0;width:16px;height:16px;background:#808000;"></div><div style="position:absolute;left:288px;top:0;width:16px;height:16px;background:#ffff00;"></div><div style="position:absolute;left:304px;top:0;width:16px;height:16px;background:#008000;"></div><div style="position:absolute;left:320px;top:0;width:16px;height:16px;background:#00ff00;"></div><div style="position:absolute;left:336px;top:0;width:16px;height:16px;background:#008080;"></div><div style="position:absolute;left:352px;top:0;width:16px;height:16px;background:#00ffff;"></div><div style="position:absolute;left:368px;top:0;width:16px;height:16px;background:#000080;"></div><div style="position:absolute;left:384px;top:0;width:16px;height:16px;background:#0000ff;"></div><div style="position:absolute;left:400px;top:0;width:16px;height:16px;background:#800080;"></div><div style="position:absolute;left:416px;top:0;width:16px;height:16px;background:#ff00ff;"></div><div style="position:absolute;left:432px;top:0;width:16px;height:16px;background:#2b0000;"></div><div style="position:absolute;left:448px;top:0;width:16px;height:16px;background:#550000;"></div><div style="position:absolute;left:464px;top:0;width:16px;height:16px;background:#800000;"></div><div style="position:absolute;left:480px;top:0;width:16px;height:16px;background:#aa0000;"></div><div style="position:absolute;left:496px;top:0;width:16px;height:16px;background:#d40000;"></div><div style="position:absolute;left:512px;top:0;width:16px;height:16px;background:#ff0000;"></div><div style="position:absolute;left:528px;top:0;width:16px;height:16px;background:#ff2a2a;"></div><div style="position:absolute;left:544px;top:0;width:16px;height:16px;background:#ff5555;"></div><div style="position:absolute;left:560px;top:0;width:16px;height:16px;background:#ff8080;"></div><div style="position:absolute;left:576px;top:0;width:16px;height:16px;background:#ffaaaa;"></div><div style="position:absolute;left:592px;top:0;width:16px;height:16px;background:#ffd5d5;"></div><div style="position:absolute;left:608px;top:0;width:16px;height:16px;background:#280b0b;"></div><div style="position:absolute;left:624px;top:0;width:16px;height:16px;background:#501616;"></div><div style="position:absolute;left:640px;top:0;width:16px;height:16px;background:#782121;"></div><div style="position:absolute;left:656px;top:0;width:16px;height:16px;background:#a02c2c;"></div><div style="position:absolute;left:672px;top:0;width:16px;height:16px;background:#c83737;"></div><div style="position:absolute;left:688px;top:0;width:16px;height:16px;background:#d35f5f;"></div><div style="position:absolute;left:704px;top:0;width:16px;height:16px;background:#de8787;"></div><div style="position:absolute;left:720px;top:0;width:16px;height:16px;background:#e9afaf;"></div><div style="position:absolute;left:736px;top:0;width:16px;height:16px;background:#f4d7d7;"></div><div style="position:absolute;left:752px;top:0;width:16px;height:16px;background:#241c1c;"></div><div style="position:absolute;left:768px;top:0;width:16px;height:16px;background:#483737;"></div><div style="position:absolute;left:784px;top:0;width:16px;height:16px;background:#6c5353;"></div><div style="position:absolute;left:800px;top:0;width:16px;height:16px;background:#916f6f;"></div><div style="position:absolute;left:816px;top:0;width:16px;height:16px;background:#ac9393;"></div><div style="position:absolute;left:832px;top:0;width:16px;height:16px;background:#c8b7b7;"></div><div style="position:absolute;left:848px;top:0;width:16px;height:16px;background:#e3dbdb;"></div><div style="position:absolute;left:864px;top:0;width:16px;height:16px;background:#2b1100;"></div><div style="position:absolute;left:880px;top:0;width:16px;height:16px;background:#552200;"></div><div style="position:absolute;left:896px;top:0;width:16px;height:16px;background:#803300;"></div><div style="position:absolute;left:912px;top:0;width:16px;height:16px;background:#aa4400;"></div><div style="position:absolute;left:928px;top:0;width:16px;height:16px;background:#d45500;"></div><div style="position:absolute;left:944px;top:0;width:16px;height:16px;background:#ff6600;"></div><div style="position:absolute;left:960px;top:0;width:16px;height:16px;background:#ff7f2a;"></div><div style="position:absolute;left:976px;top:0;width:16px;height:16px;background:#ff9955;"></div><div style="position:absolute;left:992px;top:0;width:16px;height:16px;background:#ffb380;"></div><div style="position:absolute;left:1008px;top:0;width:16px;height:16px;background:#ffccaa;"></div><div style="position:absolute;left:1024px;top:0;width:16px;height:16px;background:#ffe6d5;"></div><div style="position:absolute;left:1040px;top:0;width:16px;height:16px;background:#28170b;"></div><div style="position:absolute;left:1056px;top:0;width:16px;height:16px;background:#502d16;"></div><div style="position:absolute;left:1072px;top:0;width:16px;height:16px;background:#784421;"></div><div style="position:absolute;left:1088px;top:0;width:16px;height:16px;background:#a05a2c;"></div><div style="position:absolute;left:1104px;top:0;width:16px;height:16px;background:#c87137;"></div><div style="position:absolute;left:1120px;top:0;width:16px;height:16px;background:#d38d5f;"></div><div style="position:absolute;left:1136px;top:0;width:16px;height:16px;background:#deaa87;"></div><div style="position:absolute;left:1152px;top:0;width:16px;height:16px;background:#e9c6af;"></div><div style="position:absolute;left:1168px;top:0;width:16px;height:16px;background:#f4e3d7;"></div><div style="position:absolute;left:1184px;top:0;width:16px;height:16px;background:#241f1c;"></div><div style="position:absolute;left:1200px;top:0;width:16px;height:16px;background:#483e37;"></div><div style="position:absolute;left:1216px;top:0;width:16px;height:16px;background:#6c5d53;"></div><div style="position:absolute;left:1232px;top:0;width:16px;height:16px;background:#917c6f;"></div><div style="position:absolute;left:1248px;top:0;width:16px;height:16px;background:#ac9d93;"></div><div style="position:absolute;left:1264px;top:0;width:16px;height:16px;background:#c8beb7;"></div><div style="position:absolute;left:1280px;top:0;width:16px;height:16px;background:#e3dedb;"></div><div style="position:absolute;left:1296px;top:0;width:16px;height:16px;background:#2b2200;"></div><div style="position:absolute;left:1312px;top:0;width:16px;height:16px;background:#554400;"></div><div style="position:absolute;left:1328px;top:0;width:16px;height:16px;background:#806600;"></div><div style="position:absolute;left:1344px;top:0;width:16px;height:16px;background:#aa8800;"></div></div>
<div class="tri" style="left:1357px;top:702px;border-top:5.0px solid transparent;border-bottom:5.0px solid transparent;border-right:5.2px solid #2e3436;"></div>
<div style="position:absolute;left:0px;top:720px;width:1354px;height:13px;background:#c3c5c4;border-top:1px solid #b2b4b3;"></div>
<div style="position:absolute;left:3px;top:724px;width:258px;height:6px;background:#7a7e7e;border-radius:3px;"></div>
<!-- status bar -->
<span id="t59" class="t" style="left:1.18px;top:733.00px;font-size:12.1px;transform:scaleX(1.0149);">Fill:</span>
<span id="t60" class="t" style="left:1.72px;top:748.90px;font-size:12.1px;transform:scaleX(0.9796);">Stroke:</span>
<div style="position:absolute;left:43px;top:735px;width:39px;height:16px;background-color:#808080;background-image:linear-gradient(45deg,#c0c0c0 25%,transparent 25%,transparent 75%,#c0c0c0 75%),linear-gradient(45deg,#c0c0c0 25%,transparent 25%,transparent 75%,#c0c0c0 75%);background-size:12px 12px;background-position:0 0,6.0px 6.0px;"></div>
<div style="position:absolute;left:82px;top:735px;width:40px;height:16px;background:#000;"></div>
<div style="position:absolute;left:43px;top:751px;width:26px;height:17px;background-color:#808080;background-image:linear-gradient(45deg,#c0c0c0 25%,transparent 25%,transparent 75%,#c0c0c0 75%),linear-gradient(45deg,#c0c0c0 25%,transparent 25%,transparent 75%,#c0c0c0 75%);background-size:12px 12px;background-position:0 0,6.0px 6.0px;background-position:0 -4px,6px 2px;"></div>
<div style="position:absolute;left:69px;top:751px;width:26px;height:17px;background:#000;"></div>
<span id="t61" class="t" style="left:97.63px;top:748.50px;font-size:12.4px;transform:scaleX(0.9758);">10.3</span>
<span id="t62" class="t" style="left:125.52px;top:740.70px;font-size:12.1px;transform:scaleX(0.9778);">O:</span>
<div class="entry" style="left:141px;top:736px;width:46px;height:31px;"></div>
<div style="position:absolute;left:172px;top:737px;width:1px;height:29px;background:#dededb;"></div>
<div style="position:absolute;left:173px;top:751px;width:13px;height:1px;background:#dededb;"></div>
<span id="t63" class="t" style="left:150.90px;top:741.10px;font-size:12.4px;color:#161819;">0</span>
<div class="tri" style="left:175.2px;top:741.5px;border-left:4.5px solid transparent;border-right:4.5px solid transparent;border-bottom:4.6px solid #2e3436;"></div>
<div class="tri" style="left:175.2px;top:757.5px;border-left:4.5px solid transparent;border-right:4.5px solid transparent;border-top:4.6px solid #9a9c9b;"></div>
<div class="sep" style="left:190px;top:735px;width:1px;height:33px;"></div>
<svg style="left:195px;top:743px" width="16" height="14" viewBox="195 743 16 14" ><path d="M197 751.2 C199.5 747.6 205.5 747.4 208 751 C205.5 755 199.5 755.2 197 751.2 Z" fill="#fff" stroke="#111" stroke-width="1.1"/><circle cx="203.2" cy="751.2" r="2.3" fill="#000"/><circle cx="202.4" cy="750.3" r="0.7" fill="#fff"/><path d="M199 748.4 L197.4 747.6 M201 747.8 L199.9 745.8 M203.5 747.4 L203.5 745 M205.8 747.8 L206.6 746 M207.4 749.4 L208.3 748.4" stroke="#111" stroke-width="1.1"/></svg>
<svg style="left:218px;top:742px" width="16" height="18" viewBox="218 742 16 18" ><path d="M222.4 745.3000000000001 L227.1 745.3000000000001 C227.9 745.3000000000001 228.1 747.2 228.5 749.5" fill="none" stroke="#111" stroke-width="1.2"/><path d="M221.20000000000002 750.1 L229.1 749.2 L229.9 754.8000000000001 L221.9 755.8000000000001 Z" fill="url(#gLock)" stroke="#111" stroke-width="1.1" stroke-linejoin="round"/><path d="M224.5 751.4000000000001 L226.5 751.3000000000001 L225.70000000000002 753.6 Z" fill="#000"/></svg>
<div class="btn" style="left:237px;top:736px;width:90px;height:30px;"></div>
<span id="t64" class="t" style="left:247.55px;top:740.93px;font-size:12.3px;font-weight:bold;transform:scaleX(0.9711);">•Layer 1</span>
<div class="tri" style="left:304.5px;top:748.6px;border-left:5.5px solid transparent;border-right:5.5px solid transparent;border-top:5px solid #2e3436;"></div>
<div style="position:absolute;left:1205px;top:735px;width:1px;height:33px;background:#cfcfcd;"></div>
<span id="t65" class="t" style="left:1208.15px;top:733.20px;font-size:12.1px;transform:scaleX(0.9200);">X:</span>
<span id="t66" class="t" style="left:1208.15px;top:749.00px;font-size:12.1px;transform:scaleX(0.9684);">Y:</span>
<span id="t67" class="t" style="left:1219.20px;top:733.37px;font-size:11.6px;font-family:'DejaVu Sans Mono', 'Liberation Mono', monospace;letter-spacing:0.158px;">-397.14</span>
<span id="t68" class="t" style="left:1227.25px;top:749.17px;font-size:11.6px;font-family:'DejaVu Sans Mono', 'Liberation Mono', monospace;letter-spacing:0.060px;">857.14</span>
<span id="t69" class="t" style="left:1278.21px;top:740.70px;font-size:12.1px;transform:scaleX(0.8842);">Z:</span>
<div class="entry" style="left:1291px;top:736px;width:55px;height:31px;"></div>
<div style="position:absolute;left:1331px;top:737px;width:1px;height:29px;background:#dededb;"></div>
<div style="position:absolute;left:1332px;top:751px;width:13px;height:1px;background:#dededb;"></div>
<span id="t70" class="t" style="left:1306.65px;top:740.97px;font-size:11.6px;color:#161819;font-family:'DejaVu Sans Mono', 'Liberation Mono', monospace;letter-spacing:0.000px;">35%</span>
<div class="tri" style="left:1333.5px;top:741.5px;border-left:4.75px solid transparent;border-right:4.75px solid transparent;border-bottom:4.8px solid #2e3436;"></div>
<div class="tri" style="left:1333.5px;top:757.3px;border-left:4.75px solid transparent;border-right:4.75px solid transparent;border-top:4.8px solid #2e3436;"></div>
<svg style="left:0px;top:138px" width="40" height="548" viewBox="0 138 40 548" ><path d="M13 144 L13 159.2 L16.4 156.3 L18.6 161.5 L22 160.2 L19.7 155 L23.6 154.5 Z" fill="#000" stroke="#fff" stroke-width="0.7" stroke-opacity="0.8"/><path d="M14 174.5 C18 172.8 22 172.6 27 173.6" fill="none" stroke="#555" stroke-width="1"/><path d="M12 181 C10.5 184 10.2 187 10.3 190.5" fill="none" stroke="#555" stroke-width="1"/><rect x="10.8" y="174.8" width="5.6" height="5.6" fill="#8d8de6" stroke="#0000ff" stroke-width="1.5"/><rect x="26.5" y="172.3" width="3.3" height="3.4" fill="#b4b4ff" stroke="#4a4aff" stroke-width="0.8"/><rect x="8.4" y="190.3" width="3.3" height="3.4" fill="#b4b4ff" stroke="#4a4aff" stroke-width="0.8"/><path d="M15.7 180.2 L27.8 188 L23.1 192.8 Z" fill="#000"/><path d="M9 214.6 C13.5 214.6 15 212 16.2 208.6 C17.6 206 19 205 21 205.4 C19.6 208 20.4 214.6 26 214.6 L29.5 214.6 L29.5 222.8 L9 222.8 Z" fill="url(#gTweak)"/><path d="M8 214.6 C13 214.6 14.2 211 15.6 207 C17 203 19.2 202 22.5 202 C26 202 27.8 205 26.6 208.2 C25.6 206 23 205.6 21.6 207.6 C20.2 210 22 214.6 26 214.6 L30 214.6" fill="none" stroke="#111" stroke-width="3" stroke-linejoin="round"/><path d="M8 214.6 C13 214.6 14.2 211 15.6 207 C17 203 19.2 202 22.5 202 C26 202 27.8 205 26.6 208.2 C25.6 206 23 205.6 21.6 207.6 C20.2 210 22 214.6 26 214.6 L30 214.6" fill="none" stroke="#f4f4f4" stroke-width="0.8" stroke-linejoin="round"/><path d="M22 246 L27.2 251" stroke="#9a5200" stroke-width="5.6" stroke-linecap="round"/><path d="M22.2 246.2 L27 250.8" stroke="url(#gHandle)" stroke-width="4" stroke-linecap="round"/><path d="M19.8 243.8 L22.2 246.2" stroke="#555" stroke-width="4.6"/><path d="M20.2 244.2 L21.8 245.8" stroke="#c8c8c8" stroke-width="3.2"/><circle cx="15.3" cy="239.4" r="7.3" fill="url(#gGlass)" stroke="#2b2b2b" stroke-width="1.4"/><path d="M10.2 238 C10.8 235 13 233.4 15.6 233.3" fill="none" stroke="#fff" stroke-width="1.1" stroke-opacity="0.9"/><path d="M8.4 266.2 L17.7 261.9 L27 278.8 L16.9 283.8 Z" fill="url(#gSalmon)" stroke="#000" stroke-width="1.3" stroke-linejoin="round"/><path d="M9.6 268.6 l2.6 -1.2 M10.9 271.1 l1.7 -0.8 M12.1 273.4 l2.6 -1.2 M13.4 275.8 l1.7 -0.8 M14.6 278.1 l2.6 -1.2 M15.9 280.5 l1.7 -0.8" stroke="#000" stroke-width="1"/><rect x="9.6" y="293.6" width="19" height="19" fill="#fff" stroke="#000" stroke-width="1.2"/><rect x="11.2" y="295.2" width="15.8" height="15.8" fill="url(#gBlue)"/><path d="M9.4 325.4 L22 321.9 L20.4 334.4 L9.6 338.5 Z" fill="url(#gBoxL)"/><path d="M22 321.9 L29.2 329 L28.8 340.7 L20.4 334.4 Z" fill="url(#gBoxR)"/><path d="M9.6 338.5 L20.4 334.4 L28.8 340.7 L17.3 343.8 Z" fill="url(#gBoxB)"/><path d="M9.4 325.4 L22 321.9 L29.2 329 L28.8 340.7 L17.3 343.8 L9.6 338.5 Z" fill="none" stroke="#26262e" stroke-width="1.1" stroke-linejoin="round"/><circle cx="19" cy="363" r="9.6" fill="url(#gPink)" stroke="#000" stroke-width="1.3"/><path d="M15.3 382.5 L21.7 387 L17 397.1 L10.2 397.1 L8.3 387.8 Z" fill="url(#gYel)" stroke="#000" stroke-width="1" stroke-linejoin="round"/><path d="M22.8 387.3 L24.9 392.4 L29.9 394 L26.6 398.2 L25.6 403.5 L20.8 400.6 L14.9 401.5 L16.6 396.7 L13 391.4 L19.6 391.4 Z" fill="url(#gYel)" stroke="#000" stroke-width="1" stroke-linejoin="round"/><polyline points="18.80,422.93 18.94,422.91 19.09,422.91 19.25,422.93 19.41,422.98 19.57,423.06 19.72,423.17 19.86,423.31 19.99,423.47 20.09,423.66 20.17,423.87 20.22,424.10 20.23,424.34 20.21,424.59 20.16,424.85 20.06,425.11 19.92,425.37 19.74,425.61 19.53,425.83 19.27,426.04 18.98,426.21 18.66,426.36 18.31,426.46 17.93,426.52 17.54,426.54 17.15,426.51 16.74,426.43 16.34,426.29 15.95,426.10 15.58,425.86 15.23,425.57 14.92,425.24 14.65,424.85 14.42,424.43 14.25,423.98 14.13,423.49 14.08,422.99 14.09,422.47 14.17,421.94 14.32,421.42 14.54,420.91 14.84,420.42 15.20,419.96 15.62,419.54 16.10,419.16 16.64,418.84 17.23,418.58 17.86,418.38 18.52,418.26 19.20,418.22 19.89,418.26 20.58,418.38 21.27,418.59 21.93,418.88 22.57,419.25 23.16,419.70 23.69,420.22 24.16,420.82 24.56,421.47 24.88,422.17 25.11,422.92 25.25,423.70 25.28,424.51 25.22,425.32 25.04,426.13 24.77,426.92 24.39,427.68 23.91,428.41 23.33,429.08 22.66,429.69 21.91,430.22 21.09,430.67 20.21,431.02 19.28,431.27 18.31,431.41 17.32,431.44 16.33,431.35 15.34,431.15 14.37,430.82 13.44,430.38 12.56,429.83 11.74,429.17 11.01,428.42 10.38,427.58 9.84,426.66 9.43,425.67 9.13,424.63 8.97,423.55 8.95,422.45 9.06,421.35 9.32,420.25 9.72,419.19 10.25,418.16 10.92,417.20 11.71,416.31 12.61,415.51 13.62,414.82 14.72,414.24 15.89,413.79 17.12,413.48 18.40,413.31 19.70,413.29 21.00,413.42 22.29,413.71 23.55,414.15 24.75,414.73 25.88,415.45 26.92,416.31 27.85,417.29 28.66,418.39 29.33,419.57 29.85,420.84 30.21,422.17 30.41,423.54 30.42,424.94 30.27,426.34 29.93,427.72 29.42,429.06 28.74,430.35 27.90,431.55 26.90,432.66" fill="none" stroke="#000" stroke-width="1.1"/><path d="M8.3 443 L13.3 443 L8.3 452.5 L12.6 452.5 C14.6 452.5 14.6 455 14.4 458 C14.2 461.5 15.5 463.5 18 463.3 C21.5 463 25.5 461.5 27.6 458.4" fill="none" stroke="#000" stroke-width="1" stroke-linejoin="round"/><path d="M22.6 442 L27.2 442.4 L29.9 447.4 L25.6 456 L18.8 451.6 Z" fill="url(#gPencil)" stroke="#3a2a00" stroke-width="0.7"/><path d="M23.4 443 L20.2 451" stroke="#fff6a0" stroke-width="1"/><path d="M18.8 451.6 L25.6 456 L18.3 461.6 Z" fill="#fff8e4" stroke="#1a1a1a" stroke-width="0.8"/><path d="M18.5 457.8 L20.6 459.8 L18.3 461.6 Z" fill="#000"/><path d="M22.6 442 L18.8 451.6 L18.3 461.6" fill="none" stroke="#000" stroke-width="1.3"/><path d="M8.7 472.3 L20.8 472.3 M8.9 472.4 C13 476 17.5 481 17 485.5 C16.7 488.5 15 490.5 13.4 491.8" fill="none" stroke="#000" stroke-width="0.9"/><path d="M8.3 490.4 L11.8 490.4 L11.8 493 L18.6 493 L18.6 491.6" fill="none" stroke="#000" stroke-width="1.6"/><path d="M24 472.2 L27.6 472 L29.9 477.6 L27.6 482.6 L21.8 480.6 L20.4 478 Z" fill="url(#gPen)" stroke="#0c1c30" stroke-width="0.9"/><path d="M24.4 473.4 L22 478.2" stroke="#e8f6ff" stroke-width="1.1"/><path d="M21.8 481.6 L25.8 483 L25 485.3 L21.4 484.2 Z" fill="#f6c431" stroke="#2a1a00" stroke-width="0.7"/><path d="M22 484.8 L19.4 491.2 M23.6 485.2 L20.8 491.4" stroke="#222" stroke-width="0.9"/><path d="M9.4 502.4 C11.5 501.8 13.5 502 15.2 503 C17 509 14 515 15.6 523.6 C10.8 521 9.8 512 9.4 502.4 Z" fill="#0a0a0a"/><path d="M21.8 502.2 L29.9 505.6 L28.9 508 L20.9 504.6 Z" fill="#69a7c9" stroke="#1c3c55" stroke-width="0.6"/><path d="M23.4 505.8 L28.4 507.9 L27.7 509.6 L22.8 507.5 Z" fill="#d42222"/><path d="M22.4 507.8 L26.8 511.2 C25.8 515.5 22.5 519 18.4 521.2 C17.2 517.5 17 514 18 511 Z" fill="url(#gNib)" stroke="#111" stroke-width="1"/><path d="M20.9 512.6 L19.6 518.2" stroke="#111" stroke-width="0.9"/><circle cx="20.9" cy="512.8" r="1" fill="#111"/><path d="M21.4 523.2 C23.5 522.8 24 520.6 26 520.2 C27.4 520 28.2 520.6 29.5 520" fill="none" stroke="#000" stroke-width="1.2"/><path d="M27.5 532.3 L27.5 553.7 M25 532.2 L26.9 532.2 M28.1 532.2 L30 532.2 M25 553.8 L26.9 553.8 M28.1 553.8 L30 553.8" stroke="#111" stroke-width="0.9"/><circle cx="10.9" cy="563.9" r="1.15" fill="#000"/><circle cx="9.6" cy="568" r="1.15" fill="#000"/><circle cx="11.6" cy="572.7" r="1.15" fill="#000"/><circle cx="14" cy="565" r="0.7" fill="#222"/><circle cx="13.6" cy="568.4" r="0.7" fill="#222"/><circle cx="14.6" cy="571" r="0.6" fill="#333"/><circle cx="16" cy="566.8" r="0.6" fill="#666"/><circle cx="16.2" cy="569.6" r="0.55" fill="#777"/><circle cx="17.6" cy="568" r="0.5" fill="#999"/><circle cx="12.6" cy="566.6" r="0.5" fill="#444"/><path d="M20.4 569.6 L20.4 567.4 C20.4 565.6 24.8 565.6 24.8 567.4 L24.8 569.6 Z" fill="#fff" stroke="#000" stroke-width="1"/><path d="M19.2 572.6 C19.2 569.6 27.4 569.6 27.6 572.6 Z" fill="#f4c326" stroke="#000" stroke-width="0.8"/><path d="M18.8 572.6 L28.2 572.6 C29.6 574.5 29.8 579 29.8 583 L23.5 583.4 L18.5 580.8 Z" fill="url(#gCan)" stroke="#10280a" stroke-width="1" stroke-linejoin="round"/><path d="M18 592.3 L28.2 596.8 L18.5 613.9 L9.2 608 Z" fill="url(#gEraser)" stroke="#000" stroke-width="1.3" stroke-linejoin="round"/><ellipse cx="18" cy="642.6" rx="10" ry="1.5" fill="#8fd89c" stroke="#2c8a44" stroke-width="0.7"/><path d="M13 636 C13.6 639 14 640.5 13.6 642 L16.4 642 C15.6 640.5 15.8 639 16.6 637.6 Z" fill="#6cc67c" stroke="#2c8a44" stroke-width="0.5"/><path d="M10.8 627.9 L25.9 622.2 C27.8 624 29.2 628 29.5 632 L16.5 638.3 Z" fill="url(#gBucket)" stroke="#0e1e30" stroke-width="1" stroke-linejoin="round"/><ellipse cx="13.4" cy="633" rx="2" ry="5.6" transform="rotate(-24 13.4 633)" fill="#6fd080" stroke="#1f5f30" stroke-width="0.8"/><path d="M13.9 627 L13.9 622.7 L16.5 622.7 L18 631" fill="none" stroke="#222" stroke-width="0.9"/><circle cx="18" cy="631.6" r="1.1" fill="#ddd" stroke="#222" stroke-width="0.7"/><path d="M17 670 L22.2 674.8 L17 679.6 Z" fill="#2e3436"/></svg>
<span id="t71" class="t" style="left:6.45px;top:533.27px;font-size:26.4px;font-weight:bold;color:#0a0a0a;">A</span>
<div class="btn on" style="left:1237px;top:207px;width:26px;height:34px;"></div>
<svg style="left:1214px;top:216px" width="46" height="16" viewBox="1214 216 46 16" ><path d="M1222.0500000000002 220.7 C1220.9 218.4 1218.2 217.6 1216.8000000000002 219.29999999999998 C1215.3000000000002 221.6 1216.1000000000001 226.1 1218.4 228.6 C1219.9 230.4 1224.2 230.4 1225.7 228.6 C1228.0 226.1 1228.8000000000002 221.6 1227.3000000000002 219.29999999999998 C1225.9 217.6 1223.2 218.4 1222.0500000000002 220.7 Z M1222.0500000000002 220.79999999999998 C1220.9 223.1 1219.2 225.1 1219.3000000000002 226.5 C1219.5 229.1 1224.6000000000001 229.1 1224.8000000000002 226.5 C1224.9 225.1 1223.2 223.1 1222.0500000000002 220.79999999999998 Z" fill="#000" fill-rule="evenodd"/><path d="M1249.95 220.7 C1248.8 218.4 1246.1 217.6 1244.7 219.29999999999998 C1243.2 221.6 1244.0 226.1 1246.3 228.6 C1247.8 230.4 1252.1 230.4 1253.6 228.6 C1255.8999999999999 226.1 1256.7 221.6 1255.2 219.29999999999998 C1253.8 217.6 1251.1 218.4 1249.95 220.7 Z" fill="#000" fill-rule="evenodd"/></svg>
<svg style="left:1288px;top:138px" width="30" height="546" viewBox="1288 138 30 546" ><defs><linearGradient id="gPaper" x1="0" y1="0" x2="1" y2="1"><stop offset="0" stop-color="#ffffff"/><stop offset="1" stop-color="#d6d6d2"/></linearGradient><linearGradient id="gFold" x1="0" y1="0" x2="0" y2="1"><stop offset="0" stop-color="#d9c7a8"/><stop offset="1" stop-color="#ad9472"/></linearGradient><linearGradient id="gGreenA" x1="0" y1="0" x2="1" y2="0"><stop offset="0" stop-color="#55b812"/><stop offset="0.5" stop-color="#9be84a"/><stop offset="1" stop-color="#4aa80c"/></linearGradient><linearGradient id="gUndo" x1="0" y1="0" x2="0" y2="1"><stop offset="0" stop-color="#fff9a8"/><stop offset="0.5" stop-color="#f5dc2e"/><stop offset="1" stop-color="#e2bf10"/></linearGradient><linearGradient id="gLens" x1="0" y1="0" x2="0" y2="1"><stop offset="0" stop-color="#f4f8fc"/><stop offset="1" stop-color="#a9c7e6"/></linearGradient><pattern id="pRedo" x="0" y="0" width="2" height="2" patternUnits="userSpaceOnUse"><rect x="0" y="0" width="1" height="1" fill="#3f7d22"/><rect x="1" y="1" width="1" height="1" fill="#3f7d22"/></pattern></defs><rect x="1293.9" y="145.6" width="17" height="19.4" rx="1.6" fill="#8a8a86" fill-opacity="0.55"/><rect x="1293.6" y="144.6" width="17.2" height="19.6" rx="1.6" fill="url(#gPaper)" stroke="#b4b4b0" stroke-width="0.8"/><polygon points="1308.40,144.80 1310.10,147.85 1313.54,148.53 1311.16,151.10 1311.57,154.57 1308.40,153.10 1305.23,154.57 1305.64,151.10 1303.26,148.53 1306.70,147.85" fill="#fffef0" stroke="#efd21c" stroke-width="1.7" stroke-linejoin="round"/><path d="M1294.4 195 L1294.4 181.6 Q1294.4 180.2 1295.8 180.2 L1301 180.2 L1302.6 182 L1310.6 182 Q1311.8 182 1311.8 183.2 L1311.8 195 Z" fill="#8c6e4a" stroke="#6a5030" stroke-width="0.8"/><rect x="1298.6" y="184.6" width="10.4" height="8.4" fill="#fff" stroke="#666" stroke-width="0.8"/><path d="M1300.4 187 H1307.4 M1300.4 189 H1307.4 M1300.4 191 H1307.4" stroke="#b0b0b0" stroke-width="0.8"/><path d="M1292.6 191.6 L1313.4 190.6 L1311.8 196.6 Q1311.6 197.4 1310.6 197.4 L1295.4 197.4 Q1294.4 197.4 1294.2 196.6 Z" fill="url(#gFold)" stroke="#7a6040" stroke-width="0.8"/><path d="M1294.2 232.4 L1295.2 215 Q1295.4 213.2 1297.2 213.2 L1308.8 213.2 Q1310.6 213.2 1310.8 215 L1311.8 232.4 Q1311.8 233.6 1310.6 233.6 L1295.4 233.6 Q1294.2 233.6 1294.2 232.4 Z" fill="#e6e6e2" stroke="#a0a09c" stroke-width="0.9"/><rect x="1296.4" y="226" width="13.2" height="6.4" rx="0.8" fill="#f4f4f2" stroke="#8a8a86" stroke-width="0.9"/><path d="M1300.4 228.4 L1300.4 229.8 L1305.6 229.8 L1305.6 228.4" fill="none" stroke="#8a8a86" stroke-width="0.9"/><path d="M1301.6 212.4 Q1303 211 1304.4 212.4 L1304.4 220.4 L1308 218 Q1309.6 218.6 1308.8 220.2 L1303.6 226 Q1303 226.6 1302.4 226 L1297.2 220.2 Q1296.4 218.6 1298 218 L1301.6 220.4 Z" fill="url(#gGreenA)" stroke="#3e9a08" stroke-width="0.8" stroke-linejoin="round"/><path d="M1293 258 Q1292.4 250 1294 249.4 L1312 249.4 Q1313.6 250 1313 258 Z" fill="#3e4040" stroke="#222" stroke-width="0.8"/><rect x="1297.4" y="251.2" width="11.4" height="2.4" fill="#8a8c8c"/><path d="M1292.6 256.4 L1313.4 256.4 L1313.4 263 L1311 263 L1311 266.6 L1295 266.6 L1295 263 L1292.6 263 Z" fill="#d4d6d2" stroke="#3a3a3a" stroke-width="0.9"/><path d="M1294.6 262.6 L1294.6 266.8 L1311.4 266.8 L1311.4 262.6" fill="#2a2c2c"/><path d="M1297.4 259.4 L1308.6 259.4 L1309.4 265.2 L1296.6 265.2 Z" fill="#fff" stroke="#888" stroke-width="0.5"/><path d="M1298.8 260.6 L1304 261.4 L1306.6 264 M1300 262.6 L1304.6 262" stroke="#8cc878" stroke-width="0.9" fill="none"/><rect x="1305.4" y="264" width="1.8" height="1" fill="#4a90d8"/><rect x="1292" y="279" width="20" height="1" fill="#cbcbc8"/><rect x="1292" y="359.5" width="20" height="1" fill="#cbcbc8"/><rect x="1292" y="439.5" width="20" height="1" fill="#cbcbc8"/><rect x="1292" y="553.3" width="20" height="1" fill="#cbcbc8"/><path d="M1299.4 294.4 L1307.6 294.4 L1311.6 298.4 L1311.6 311.2 L1299.4 311.2 Z" fill="url(#gPaper)" stroke="#000" stroke-width="1.2" stroke-linejoin="round"/><path d="M1307.4 294.6 L1307.4 298.6 L1311.4 298.6" fill="#fff" stroke="#000" stroke-width="0.9"/><path d="M1294 303.1 H1302" stroke="#000" stroke-width="1.4"/><path d="M1301.4 300.4 L1305.6 303.1 L1301.4 305.8 Z" fill="#000"/><path d="M1294.6 328.6 L1303.6 328.6 L1307.6 332.6 L1307.6 345.4 L1294.6 345.4 Z" fill="url(#gPaper)" stroke="#000" stroke-width="1.2" stroke-linejoin="round"/><path d="M1303.4 328.8 L1303.4 332.8 L1307.4 332.8" fill="#fff" stroke="#000" stroke-width="0.9"/><path d="M1301.2 337.5 H1309" stroke="#000" stroke-width="1.4"/><path d="M1308 334.8 L1312.2 337.5 L1308 340.2 Z" fill="#000"/><path d="M1292.8 380.6 L1299.6 374.2 L1299.6 378 L1308 378 C1315.4 378 1315.6 389.6 1306 390 C1305 389.8 1305.2 388.4 1306 388 C1310.4 387 1310.2 383.2 1307 383.2 L1299.6 383.2 L1299.6 386.8 Z" fill="url(#gUndo)" stroke="#c4a000" stroke-width="1" stroke-linejoin="round"/><path d="M1313.8 414.4 L1306.4 408 L1306.4 411.6 L1299 411.6 C1291.6 411.8 1291.6 423.6 1296.4 424.8 C1297.6 424.8 1297.4 423.4 1297 422.8 C1296 420 1297.4 417 1300.4 417 L1306.4 417 L1306.4 420.6 Z" fill="url(#pRedo)"/><rect x="1300.4" y="460.6" width="12.2" height="11.8" fill="#fff" stroke="#77776f" stroke-width="1"/><path d="M1303 466.6 H1310 M1303 468.6 H1310 M1303 470.4 H1307" stroke="#aaa" stroke-width="0.8"/><rect x="1293.5" y="453.8" width="12.2" height="11.8" fill="#fff" stroke="#77776f" stroke-width="1"/><path d="M1296 456.6 H1303.2 M1296 458.6 H1303.2 M1296 460.6 H1303.2 M1296 462.6 H1300" stroke="#aaa" stroke-width="0.8"/><path d="M1303.6 499.2 L1296.6 487.4 C1296.4 485.6 1298 485.8 1298.6 487 L1304.6 498 Z" fill="#f2f2f0" stroke="#909090" stroke-width="0.7"/><path d="M1303 499.2 L1310 487.4 C1310.2 485.6 1308.6 485.8 1308 487 L1302 498 Z" fill="#f2f2f0" stroke="#909090" stroke-width="0.7"/><circle cx="1299" cy="503" r="2.7" fill="#fff" stroke="#d01414" stroke-width="2.2"/><circle cx="1308" cy="503" r="2.7" fill="#fff" stroke="#d01414" stroke-width="2.2"/><circle cx="1299" cy="503" r="1.1" fill="none" stroke="#a00" stroke-width="0.5"/><circle cx="1308" cy="503" r="1.1" fill="none" stroke="#a00" stroke-width="0.5"/><rect x="1294.4" y="522.4" width="16.4" height="16.8" rx="1.8" fill="#e2ab62" stroke="#a87634" stroke-width="1"/><path d="M1298 525.4 L1298 523.6 L1300.4 523.6 L1300.4 521.2 Q1300.4 520.4 1301.2 520.4 L1304.4 520.4 Q1305.2 520.4 1305.2 521.2 L1305.2 523.6 L1307.6 523.6 L1307.6 525.4 Z" fill="#e0e0dc" stroke="#77776f" stroke-width="0.8"/><rect x="1302" y="528.6" width="11.4" height="11.6" fill="#fff" stroke="#77776f" stroke-width="1"/><path d="M1304.4 531.4 H1311 M1304.4 533.4 H1311 M1304.4 535.4 H1311 M1304.4 537.4 H1308" stroke="#aaa" stroke-width="0.8"/><path d="M1308.6 581.8000000000001 L1311.4 584.6" stroke="#000" stroke-width="3" stroke-linecap="round"/><circle cx="1303.2" cy="576.2" r="7.6" fill="url(#gLens)" stroke="#000" stroke-width="1.7"/><path d="M1308.6 616.2 L1311.4 619.0" stroke="#000" stroke-width="3" stroke-linecap="round"/><circle cx="1303.2" cy="610.6" r="7.6" fill="url(#gLens)" stroke="#000" stroke-width="1.7"/><path d="M1308.6 650.0 L1311.4 652.8" stroke="#000" stroke-width="3" stroke-linecap="round"/><circle cx="1303.2" cy="644.4" r="7.6" fill="url(#gLens)" stroke="#000" stroke-width="1.7"/><rect x="1298.3" y="572" width="9.8" height="8" fill="#fff" stroke="#000" stroke-width="1.1" stroke-dasharray="1.2 1"/><rect x="1298.6" y="606.4" width="5.2" height="5.2" fill="#f8d24a" stroke="#2a2000" stroke-width="0.9"/><rect x="1301.8" y="609.6" width="5.6" height="5.6" fill="#f5c224" stroke="#2a2000" stroke-width="0.9"/><rect x="1302.8" y="610.6" width="2" height="2" fill="#fff2b0"/><rect x="1299.6" y="639.8" width="6.8" height="8.8" fill="url(#gPaper)" stroke="#000" stroke-width="1.1"/><path d="M1301 669.8 L1306.4 675 L1301 680.2 Z" fill="#2e3436"/></svg>
<div class="btn on" style="left:1329px;top:139px;width:32px;height:32px;"></div>
<div class="btn on" style="left:1329px;top:367px;width:32px;height:32px;"></div>
<div class="btn on" style="left:1329px;top:583px;width:32px;height:32px;"></div>
<svg style="left:1326px;top:138px" width="40" height="546" viewBox="1326 138 40 546" ><path d="M1340.6 151 L1346.6 157" stroke="#000" stroke-width="1.3"/><path d="M1349 159.2 L1344.2 157.8 L1347.4 154.6 Z" fill="#000"/><path d="M1338.9 145.9 L1342.1 149.1 L1338.9 152.3 L1335.7 149.1 Z" fill="#b4b4f0" stroke="#0000ff" stroke-width="1.2"/><path d="M1350.3 157.2 L1353.5 160.4 L1350.3 163.6 L1347.1 160.4 Z" fill="#c2c2e8" stroke="#0a8a0a" stroke-width="1.2"/><path d="M1340.6 196.8 L1346.6 202.8" stroke="#000" stroke-width="1.3"/><path d="M1349 205.0 L1344.2 203.60000000000002 L1347.4 200.39999999999998 Z" fill="#000"/><path d="M1338.9 191.7 L1342.1 194.89999999999998 L1338.9 198.10000000000002 L1335.7 194.89999999999998 Z" fill="#b4b4f0" stroke="#0000ff" stroke-width="1.2"/><path d="M1350.3 203.0 L1353.5 206.2 L1350.3 209.39999999999998 L1347.1 206.2 Z" fill="#c2c2e8" stroke="#0a8a0a" stroke-width="1.2"/><path d="M1340.6 378.9 L1346.6 384.9" stroke="#000" stroke-width="1.3"/><path d="M1349 387.1 L1344.2 385.70000000000005 L1347.4 382.5 Z" fill="#000"/><path d="M1338.9 373.8 L1342.1 377.0 L1338.9 380.20000000000005 L1335.7 377.0 Z" fill="#b4b4f0" stroke="#0000ff" stroke-width="1.2"/><path d="M1350.3 385.1 L1353.5 388.3 L1350.3 391.5 L1347.1 388.3 Z" fill="#c2c2e8" stroke="#0a8a0a" stroke-width="1.2"/><path d="M1340.6 594.8 L1346.6 600.8" stroke="#000" stroke-width="1.3"/><path d="M1349 603.0 L1344.2 601.6 L1347.4 598.4 Z" fill="#000"/><path d="M1338.9 589.7 L1342.1 592.9 L1338.9 596.1 L1335.7 592.9 Z" fill="#b4b4f0" stroke="#0000ff" stroke-width="1.2"/><path d="M1350.3 601.0 L1353.5 604.2 L1350.3 607.4 L1347.1 604.2 Z" fill="#c2c2e8" stroke="#0a8a0a" stroke-width="1.2"/><rect x="1334" y="177" width="20" height="1" fill="#cbcbc8"/><rect x="1334" y="359.5" width="20" height="1" fill="#cbcbc8"/><rect x="1334" y="575.5" width="20" height="1" fill="#cbcbc8"/><path d="M1351.4 226.4 V241.2 H1337" fill="none" stroke="#1a4a1a" stroke-width="1" stroke-dasharray="1 1.2"/><path d="M1351 260.8 V275.5 H1337" fill="none" stroke="#1a4a1a" stroke-width="1" stroke-dasharray="1 1.2"/><path d="M1351 272.8 L1353.6 275.5 L1351 278.2 L1348.4 275.5 Z" fill="#c8c8e0" stroke="#1a5a1a" stroke-width="0.8"/><path d="M1350.4 296 V308.3 H1336.5" fill="none" stroke="#111" stroke-width="1" stroke-dasharray="1.2 1.2"/><path d="M1350.2 295.6 L1352.8 298.8 L1350.2 302 L1347.6 298.8 Z" fill="#c8c8e0" stroke="#1a5a1a" stroke-width="0.8"/><path d="M1350.6 329 V342.5 H1337" fill="none" stroke="#111" stroke-width="1" stroke-dasharray="1.2 1.2"/><circle cx="1340.7" cy="333.1" r="2.1" fill="#c8c8e0" stroke="#1a6a1a" stroke-width="0.9"/><path d="M1337 409.6 C1343.5 410.6 1348.6 415.6 1347 423" fill="none" stroke="#0a7a0a" stroke-width="1.5"/><path d="M1353.7 417.6 C1352.6 421.6 1349.6 423.6 1344.9 423.7" fill="none" stroke="#0a7a0a" stroke-width="1.5"/><path d="M1337 458.9 L1353.7 442.4 M1337 452.8 C1343 450.6 1348 450.4 1353.7 448.1" fill="none" stroke="#555" stroke-width="1"/><circle cx="1345.4" cy="450.7" r="2.2" fill="#7a7ad0" stroke="#0a8a0a" stroke-width="1.3"/><path d="M1336.2 476.6 C1343 477.6 1348.6 482 1347.4 487.6" fill="none" stroke="#666" stroke-width="1.1"/><path d="M1352.7 484 C1352 487.4 1350 489.4 1347 489.8" fill="none" stroke="#666" stroke-width="1.1"/><path d="M1344.3 487.3 L1347.3 490.3 L1344.3 493.3 L1341.3 490.3 Z" fill="#8a8ad8" stroke="#0a8a0a" stroke-width="1.3"/><path d="M1336.5 510.3 C1340 510.6 1342 511.6 1344.3 513.4 C1347.6 516 1348.6 520 1347 523.6" fill="none" stroke="#666" stroke-width="1.1"/><path d="M1352.7 518.4 C1352 522 1349 524.2 1344.3 524.5" fill="none" stroke="#666" stroke-width="1.1"/><rect x="1342.2" y="511.2" width="4.3" height="4.3" fill="#8a8ad8" stroke="#0a8a0a" stroke-width="1.2"/><path d="M1336.8 561.6 L1353.2 545.3" stroke="#666" stroke-width="1"/><path d="M1338.4 561.4 L1340.4 555.8 M1340.6 559.6 L1342.4 554 M1347.6 552.4 L1349.6 546.6 M1349.8 550.4 L1351.6 544.8" stroke="#e01428" stroke-width="1.3"/><circle cx="1345" cy="553.5" r="2.2" fill="#8a8ad8" stroke="#0a8a0a" stroke-width="1.3"/><path d="M1350.6 624.1 V638 H1336.2" fill="none" stroke="#777" stroke-width="1.3"/><circle cx="1342.3" cy="629.8" r="2" fill="#c8c8ea" stroke="#0a8a0a" stroke-width="1.2"/><path d="M1342.6 669.8 L1348 675 L1342.6 680.2 Z" fill="#2e3436"/></svg>
</body></html>
